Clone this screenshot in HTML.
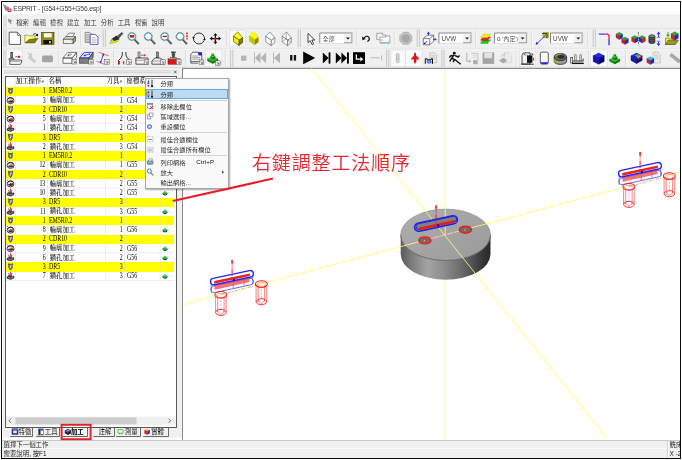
<!DOCTYPE html><html><head><meta charset="utf-8"><title>ESPRIT</title><style>
html,body{margin:0;padding:0;background:#fff;}
body{width:682px;height:460px;position:relative;overflow:hidden;will-change:transform;font-family:"Liberation Sans","Noto Sans CJK TC",sans-serif;font-size:7px;color:#000;line-height:1;}
div,span{position:absolute;box-sizing:border-box;white-space:nowrap;}
svg{position:absolute;left:0;top:0;overflow:visible}
#frame{left:1px;top:1px;width:680px;height:458px;border:1px solid #0a0a0a;z-index:10;pointer-events:none;}
#title{left:2px;top:2px;width:678px;height:12px;background:#fff;}
#title span{left:11.2px;top:3.6px;font-size:6.75px;color:#3c3c3c;letter-spacing:-0.19px;}
#menubar{left:2px;top:14px;width:678px;height:14px;background:#f1f1f1;}
.mi{top:5.6px;font-size:6.4px;color:#2a2a2a;font-weight:350;}
#tb{left:2px;top:28px;width:678px;height:40px;background:#f0f0f0;}
#left{left:2px;top:68px;width:181px;height:370.4px;background:#f0f0f0;}
#list{left:5.2px;top:76.2px;width:171.8px;height:351.4px;background:#fff;border:1px solid #585858;}
.row{left:6px;width:168.4px;height:9.25px;}
.y{background:#ffff00;}
.c{font-family:"Liberation Serif","Noto Serif CJK SC",serif;font-size:6.4px;top:1.5px;color:#000;font-weight:500;}
.l{font-size:7.3px;top:0.7px;transform:scaleX(0.81);transform-origin:0 0;font-weight:400;}
.r{font-size:7.3px;top:0.7px;transform:scaleX(0.81);transform-origin:100% 0;font-weight:400;}
.hd{font-family:"Liberation Serif","Noto Serif CJK SC",serif;font-size:6.4px;top:78.2px;color:#000;font-weight:500;}
#view{left:181.7px;top:67.8px;width:498.3px;height:371.8px;background:#fff;border-top:1px solid #8a8a8a;border-left:1px solid #8a8a8a;}
#status{left:2px;top:439.6px;width:678px;height:18.4px;background:#f0f0f0;border-top:1px solid #c8c8c8;overflow:hidden;}
#status span{font-size:6.4px;color:#111;font-weight:350;}
#cm{left:144.6px;top:78px;width:84px;height:110.5px;background:#f9f9f9;border:1px solid #a6a6a6;box-shadow:1px 1px 1.5px rgba(0,0,0,.35);}
.cmi{left:14.9px;font-size:6.2px;color:#101010;font-weight:350;letter-spacing:0.1px;}
.sep{left:14px;width:67px;height:1px;background:#d4d4d4;}
#note{left:252.0px;top:153.9px;font-size:19px;font-weight:350;color:#ec2430;font-family:"Liberation Sans","Noto Sans CJK TC",sans-serif;letter-spacing:0.85px;}
.tab{top:427.6px;height:9.4px;font-size:6.4px;font-family:"Liberation Sans","Noto Sans CJK TC",sans-serif;border-right:1px solid #6a6a6a;border-bottom:1px solid #6a6a6a;background:#f0f0f0;font-weight:350;border-radius:0 0 1.5px 1px;}
.tab span{top:1.3px;}
</style></head><body>
<div id="title"><span>ESPRIT - [G54+G55+G56.esp]</span></div>
<div id="menubar">
<span class="mi" style="left:14.20px">檔案</span>
<span class="mi" style="left:31.12px">編輯</span>
<span class="mi" style="left:48.04px">檢視</span>
<span class="mi" style="left:64.96px">建立</span>
<span class="mi" style="left:81.88px">加工</span>
<span class="mi" style="left:98.80px">分析</span>
<span class="mi" style="left:115.72px">工具</span>
<span class="mi" style="left:132.64px">視窗</span>
<span class="mi" style="left:149.56px">說明</span>
</div>
<div id="tb"></div>
<div id="left"></div><div style="left:2px;top:14px;width:1.4px;height:425px;background:#fcfcfc"></div>
<div id="list"></div>
<span class="hd" style="left:15.8px">加工操作<i style="font-size:5px">#</i></span>
<span class="hd" style="left:48.5px">名稱</span>
<span class="hd" style="left:106.6px">刀具<i style="font-size:5px">#</i></span>
<span class="hd" style="left:126.5px">座標系</span>
<div class="row y" style="top:86.60px"><span class="c r" style="right:128.7px">1</span><span class="c l" style="left:43.4px">EM5R0.2</span><span class="c r" style="right:51.4px">1</span><span class="c l" style="left:120.8px"></span></div>
<div class="row" style="top:95.85px"><span class="c r" style="right:128.7px">3</span><span class="c " style="left:43.7px">輪廓加工</span><span class="c r" style="right:51.4px">1</span><span class="c l" style="left:120.8px">G54</span></div>
<div class="row y" style="top:105.10px"><span class="c r" style="right:128.7px">2</span><span class="c l" style="left:43.4px">CDR10</span><span class="c r" style="right:51.4px">2</span><span class="c l" style="left:120.8px"></span></div>
<div class="row" style="top:114.35px"><span class="c r" style="right:128.7px">5</span><span class="c " style="left:43.7px">輪廓加工</span><span class="c r" style="right:51.4px">2</span><span class="c l" style="left:120.8px">G54</span></div>
<div class="row" style="top:123.60px"><span class="c r" style="right:128.7px">1</span><span class="c " style="left:43.7px">鑽孔加工</span><span class="c r" style="right:51.4px">2</span><span class="c l" style="left:120.8px">G54</span></div>
<div class="row y" style="top:132.85px"><span class="c r" style="right:128.7px">3</span><span class="c l" style="left:43.4px">DR5</span><span class="c r" style="right:51.4px">3</span><span class="c l" style="left:120.8px"></span></div>
<div class="row" style="top:142.10px"><span class="c r" style="right:128.7px">2</span><span class="c " style="left:43.7px">鑽孔加工</span><span class="c r" style="right:51.4px">3</span><span class="c l" style="left:120.8px">G54</span></div>
<div class="row y" style="top:151.35px"><span class="c r" style="right:128.7px">1</span><span class="c l" style="left:43.4px">EM5R0.2</span><span class="c r" style="right:51.4px">1</span><span class="c l" style="left:120.8px"></span></div>
<div class="row" style="top:160.60px"><span class="c r" style="right:128.7px">12</span><span class="c " style="left:43.7px">輪廓加工</span><span class="c r" style="right:51.4px">1</span><span class="c l" style="left:120.8px">G55</span></div>
<div class="row y" style="top:169.85px"><span class="c r" style="right:128.7px">2</span><span class="c l" style="left:43.4px">CDR10</span><span class="c r" style="right:51.4px">2</span><span class="c l" style="left:120.8px"></span></div>
<div class="row" style="top:179.10px"><span class="c r" style="right:128.7px">13</span><span class="c " style="left:43.7px">輪廓加工</span><span class="c r" style="right:51.4px">2</span><span class="c l" style="left:120.8px">G55</span></div>
<div class="row" style="top:188.35px"><span class="c r" style="right:128.7px">10</span><span class="c " style="left:43.7px">鑽孔加工</span><span class="c r" style="right:51.4px">2</span><span class="c l" style="left:120.8px">G55</span></div>
<div class="row y" style="top:197.60px"><span class="c r" style="right:128.7px">3</span><span class="c l" style="left:43.4px">DR5</span><span class="c r" style="right:51.4px">3</span><span class="c l" style="left:120.8px"></span></div>
<div class="row" style="top:206.85px"><span class="c r" style="right:128.7px">11</span><span class="c " style="left:43.7px">鑽孔加工</span><span class="c r" style="right:51.4px">3</span><span class="c l" style="left:120.8px">G55</span></div>
<div class="row y" style="top:216.10px"><span class="c r" style="right:128.7px">1</span><span class="c l" style="left:43.4px">EM5R0.2</span><span class="c r" style="right:51.4px">1</span><span class="c l" style="left:120.8px"></span></div>
<div class="row" style="top:225.35px"><span class="c r" style="right:128.7px">8</span><span class="c " style="left:43.7px">輪廓加工</span><span class="c r" style="right:51.4px">1</span><span class="c l" style="left:120.8px">G56</span></div>
<div class="row y" style="top:234.60px"><span class="c r" style="right:128.7px">2</span><span class="c l" style="left:43.4px">CDR10</span><span class="c r" style="right:51.4px">2</span><span class="c l" style="left:120.8px"></span></div>
<div class="row" style="top:243.85px"><span class="c r" style="right:128.7px">9</span><span class="c " style="left:43.7px">輪廓加工</span><span class="c r" style="right:51.4px">2</span><span class="c l" style="left:120.8px">G56</span></div>
<div class="row" style="top:253.10px"><span class="c r" style="right:128.7px">6</span><span class="c " style="left:43.7px">鑽孔加工</span><span class="c r" style="right:51.4px">2</span><span class="c l" style="left:120.8px">G56</span></div>
<div class="row y" style="top:262.35px"><span class="c r" style="right:128.7px">3</span><span class="c l" style="left:43.4px">DR5</span><span class="c r" style="right:51.4px">3</span><span class="c l" style="left:120.8px"></span></div>
<div class="row" style="top:271.60px"><span class="c r" style="right:128.7px">7</span><span class="c " style="left:43.7px">鑽孔加工</span><span class="c r" style="right:51.4px">3</span><span class="c l" style="left:120.8px">G56</span></div>
<div id="view"></div>
<div id="status"><div style="left:0;top:7.6px;width:666px;height:1px;background:#fbfbfb"></div><div style="left:666.2px;top:0;width:1px;height:18px;background:#fdfdfd"></div><div style="left:665.4px;top:0;width:0.8px;height:18px;background:#d4d4d4"></div><span style="left:1.6px;top:1.5px">選擇下一個工作</span><span style="left:1.6px;top:10.8px">需要說明, 按F1</span><span style="left:667.6px;top:1.5px">銑床</span><span style="left:667.6px;top:10.4px">X -2</span></div>
<div class="tab" style="left:10px;width:23.4px;"><span style="left:8.6px">特徵</span></div>
<div class="tab" style="left:36.2px;width:23.6px;"><span style="left:8.6px">工具</span></div>
<div class="tab" style="left:62.4px;width:25.6px;font-weight:bold;background:#f6f6f6;"><span style="left:8.6px">加工</span></div>
<div class="tab" style="left:93px;width:21.6px;"><span style="left:5.5px">註解</span></div>
<div class="tab" style="left:116.2px;width:24.8px;"><span style="left:8.6px">測量</span></div>
<div class="tab" style="left:142.6px;width:26.2px;"><span style="left:8.6px">實體</span></div>
<svg width="682" height="460" viewBox="0 0 682 460"><polygon points="3,4 9.8,7.4 8.4,8.6 7.4,10.8 5.2,10.6" fill="#8c8c8c"/><polygon points="3,4 9.8,7.4 7,7.6" fill="#b4b4b4"/><rect x="7.6" y="8.6" width="3.8" height="3.4" fill="#d8203a"/><path d="M8.3,10.3h2.4M9.5,9.2v2.2" stroke="#fff" stroke-width="0.6"/><line x1="4.2" y1="15.5" x2="4.2" y2="27.4" stroke="#c4c4c4" stroke-width="0.7"/><line x1="6" y1="15.5" x2="6" y2="27.4" stroke="#c4c4c4" stroke-width="0.7"/><polygon points="8,18.5 12.8,20.8 10.8,21.4 11.6,23.8 10.4,24 9.8,22 8.6,23" fill="#909090"/><line x1="2" y1="28.3" x2="680" y2="28.3" stroke="#dcdcdc" stroke-width="0.7"/><line x1="2" y1="48.4" x2="680" y2="48.4" stroke="#dedede" stroke-width="0.7"/><line x1="2" y1="49.2" x2="680" y2="49.2" stroke="#fafafa" stroke-width="0.7"/><line x1="2" y1="67.4" x2="680" y2="67.4" stroke="#d0d0d0" stroke-width="0.8"/><line x1="3.8" y1="29.5" x2="3.8" y2="47.0" stroke="#bdbdbd" stroke-width="0.8"/><line x1="6.0" y1="29.5" x2="6.0" y2="47.0" stroke="#bdbdbd" stroke-width="0.8"/><g transform="translate(8.80 31.80)"><path d="M0.4,0.4 H8.6 L11.8,3.8 V12.6 H0.4 Z" fill="#fff" stroke="#333" stroke-width="0.8"/><path d="M8.6,0.4 V3.8 H11.8" fill="none" stroke="#333" stroke-width="0.6"/></g><g transform="translate(24.50 32.00)"><path d="M0.3,3.1 H3.4 L4.2,3.9 H10.7 V10.6 H0.3 Z" fill="#ffff8c" stroke="#5a5a00" stroke-width="0.5"/><polygon points="0.6,10.8 5,7.3 13.5,6.5 9.9,10.8" fill="#848400" stroke="#3a3a00" stroke-width="0.5"/><path d="M8.6,2.4 q2.4,-2 4.2,0.8" fill="none" stroke="#111" stroke-width="0.8"/><polygon points="13.6,1.6 13.4,4.6 11,3.6" fill="#111"/></g><g transform="translate(41.30 32.00)"><rect x="0.3" y="0.3" width="12.4" height="12" fill="#8c8c10" stroke="#3c3c00" stroke-width="0.6"/><rect x="2.6" y="1.2" width="7.8" height="4.2" fill="#fafafa"/><rect x="2" y="8" width="8.6" height="4.2" fill="#111"/><rect x="7.8" y="9" width="1.6" height="2.4" fill="#ddd"/></g><line x1="59" y1="30.5" x2="59" y2="46.0" stroke="#c6c6c6" stroke-width="0.7"/><line x1="59.7" y1="30.5" x2="59.7" y2="46.0" stroke="#ffffff" stroke-width="0.7"/><g transform="translate(62.70 32.00)"><polygon points="3.2,4.8 6,1.2 12,1.2 10,4.8" fill="#fff" stroke="#333" stroke-width="0.6"/><polygon points="0.5,7.2 3.2,4.6 12.8,4.6 10.4,7.2" fill="#e0e0e0" stroke="#333" stroke-width="0.6"/><rect x="0.5" y="7.2" width="9.9" height="4.3" fill="#f4f4f4" stroke="#333" stroke-width="0.6"/><polygon points="10.4,7.2 12.8,4.6 12.8,9 10.4,11.5" fill="#9a9a9a" stroke="#333" stroke-width="0.6"/><rect x="7.6" y="8.2" width="1.8" height="1.2" fill="#f0e000"/></g><line x1="80.6" y1="30.5" x2="80.6" y2="46.0" stroke="#c6c6c6" stroke-width="0.7"/><line x1="81.3" y1="30.5" x2="81.3" y2="46.0" stroke="#ffffff" stroke-width="0.7"/><g transform="translate(84.80 32.00)"><path d="M0.4,0.4 H5 L7.2,2.6 V10.4 H0.4 Z" fill="#e4e4e4" stroke="#555" stroke-width="0.6"/><path d="M1.4,2.6h3.4M1.4,4.2h4.6M1.4,5.8h4.6M1.4,7.4h4.6M1.4,9h4.6" stroke="#666" stroke-width="0.5"/><path d="M5.4,2.4 H10.4 L13.2,5 V12.4 H5.4 Z" fill="#fdfdff" stroke="#3c3cb0" stroke-width="0.8"/><path d="M6.8,5.6h3.6M6.8,7.2h5M6.8,8.8h5M6.8,10.4h5" stroke="#888" stroke-width="0.5"/></g><line x1="103.2" y1="29.5" x2="103.2" y2="47.0" stroke="#bdbdbd" stroke-width="0.8"/><line x1="105.4" y1="29.5" x2="105.4" y2="47.0" stroke="#bdbdbd" stroke-width="0.8"/><g transform="translate(109.30 32.00)"><polygon points="0.5,11.8 1.5,9.2 9,7.4 8,10" fill="#e8e810" stroke="#8a8a00" stroke-width="0.4"/><polygon points="2.6,6.8 7.2,3.6 10.4,7.2 4.6,9" fill="#2c2c2c"/><polygon points="8,4.2 12.6,0.4 13.6,1.6 9.6,6" fill="#555" stroke="#111" stroke-width="0.5"/><path d="M3,6.6 L1.6,9.2" stroke="#333" stroke-width="0.6"/></g><g transform="translate(127.60 32.00)"><line x1="7" y1="7.4" x2="11.2" y2="12" stroke="#4a4a4a" stroke-width="2"/><line x1="7.8" y1="7.4" x2="11.4" y2="11.4" stroke="#d0d0d0" stroke-width="0.6"/><circle cx="4.3" cy="4.5" r="3.6" fill="#fff" stroke="#20a8b8" stroke-width="1"/><circle cx="4.3" cy="4.5" r="4.2" fill="none" stroke="#555" stroke-width="0.35"/><rect x="2.2" y="3" width="4.4" height="2.6" fill="#e81010"/></g><g transform="translate(144.00 32.00)"><line x1="7" y1="7.4" x2="11.2" y2="12" stroke="#4a4a4a" stroke-width="2"/><line x1="7.8" y1="7.4" x2="11.4" y2="11.4" stroke="#d0d0d0" stroke-width="0.6"/><circle cx="4.3" cy="4.5" r="3.6" fill="#fff" stroke="#20a8b8" stroke-width="1"/><circle cx="4.3" cy="4.5" r="4.2" fill="none" stroke="#555" stroke-width="0.35"/></g><g transform="translate(160.40 32.00)"><line x1="7" y1="7.4" x2="11.2" y2="12" stroke="#4a4a4a" stroke-width="2"/><line x1="7.8" y1="7.4" x2="11.4" y2="11.4" stroke="#d0d0d0" stroke-width="0.6"/><circle cx="4.3" cy="4.5" r="3.6" fill="#fff" stroke="#20a8b8" stroke-width="1"/><circle cx="4.3" cy="4.5" r="4.2" fill="none" stroke="#555" stroke-width="0.35"/><rect x="2.2" y="3.7" width="4.4" height="1.4" fill="#e81010"/></g><g transform="translate(175.80 32.00)"><line x1="7" y1="7.4" x2="11.2" y2="12" stroke="#4a4a4a" stroke-width="2"/><line x1="7.8" y1="7.4" x2="11.4" y2="11.4" stroke="#d0d0d0" stroke-width="0.6"/><circle cx="4.3" cy="4.5" r="3.6" fill="#fff" stroke="#20a8b8" stroke-width="1"/><circle cx="4.3" cy="4.5" r="4.2" fill="none" stroke="#555" stroke-width="0.35"/><rect x="10.4" y="0.6" width="1.6" height="1.8" fill="#e81010"/><rect x="10.4" y="3.4" width="1.6" height="1.8" fill="#e81010"/><rect x="10.4" y="6.2" width="1.6" height="1.2" fill="#e81010"/></g><g transform="translate(192.70 32.00)"><circle cx="6.3" cy="6.5" r="5.5" fill="none" stroke="#222" stroke-width="0.9"/><polygon points="-0.4,5 2,5 0.8,7.4" fill="#111"/><polygon points="10.6,8 13,8 11.8,5.6" fill="#111"/></g><g transform="translate(209.70 32.90)"><path d="M5.7,1.4V10M1.4,5.7H10" stroke="#111" stroke-width="1.3"/><polygon points="5.7,0 7.7,2.5 3.7,2.5" fill="#111"/><polygon points="5.7,11.4 7.7,8.9 3.7,8.9" fill="#111"/><polygon points="0,5.7 2.5,3.7 2.5,7.7" fill="#111"/><polygon points="11.4,5.7 8.9,3.7 8.9,7.7" fill="#111"/><circle cx="5.7" cy="5.7" r="1.2" fill="#e81010"/></g><line x1="226.5" y1="30.5" x2="226.5" y2="46.0" stroke="#c6c6c6" stroke-width="0.7"/><line x1="227.2" y1="30.5" x2="227.2" y2="46.0" stroke="#ffffff" stroke-width="0.7"/><rect x="229.6" y="30.2" width="15.8" height="16.2" fill="#fbfbfb" stroke="#d8d8d8" stroke-width="0.5"/><g transform="translate(233.40 31.90)"><polygon points="4.4,0 9.3,5.9 5.8,8.2 0,4.3" fill="#ffff00" stroke="#303000" stroke-width="0.55" stroke-linejoin="round"/><polygon points="0,4.3 5.8,8.2 5.5,13.6 0.3,10" fill="#f4f400" stroke="#303000" stroke-width="0.55" stroke-linejoin="round"/><polygon points="5.8,8.2 9.3,5.9 9.3,10.5 5.5,13.6" fill="#808000" stroke="#303000" stroke-width="0.55" stroke-linejoin="round"/></g><g transform="translate(249.20 31.40)"><polygon points="4.4,0 9.3,5.9 5.8,8.2 0,4.3" fill="#ffff00" stroke="#b8b800" stroke-width="0.2" stroke-linejoin="round"/><polygon points="0,4.3 5.8,8.2 5.5,13.6 0.3,10" fill="#c4c400" stroke="#b8b800" stroke-width="0.2" stroke-linejoin="round"/><polygon points="5.8,8.2 9.3,5.9 9.3,10.5 5.5,13.6" fill="#8a8a00" stroke="#b8b800" stroke-width="0.2" stroke-linejoin="round"/></g><g transform="translate(265.60 32.00)"><polygon points="4.4,0 9.3,5.9 5.8,8.2 0,4.3" fill="#fcfcfc" stroke="#555" stroke-width="0.55" stroke-linejoin="round"/><polygon points="0,4.3 5.8,8.2 5.5,13.6 0.3,10" fill="#f8f8f8" stroke="#555" stroke-width="0.55" stroke-linejoin="round"/><polygon points="5.8,8.2 9.3,5.9 9.3,10.5 5.5,13.6" fill="#f4f4f4" stroke="#555" stroke-width="0.55" stroke-linejoin="round"/></g><g transform="translate(282.00 32.00)"><polygon points="4.4,0 9.3,5.9 5.8,8.2 0,4.3" fill="#fcfcfc" stroke="#555" stroke-width="0.55" stroke-linejoin="round"/><polygon points="0,4.3 5.8,8.2 5.5,13.6 0.3,10" fill="#f8f8f8" stroke="#555" stroke-width="0.55" stroke-linejoin="round"/><polygon points="5.8,8.2 9.3,5.9 9.3,10.5 5.5,13.6" fill="#f4f4f4" stroke="#555" stroke-width="0.55" stroke-linejoin="round"/><path d="M4.1,6.7 L4.4,0 M4.1,6.7 L0.3,10 M4.1,6.7 L9.3,10.5" fill="none" stroke="#555" stroke-width="0.44000000000000006"/></g><line x1="298.2" y1="29.5" x2="298.2" y2="47.0" stroke="#bdbdbd" stroke-width="0.8"/><line x1="300.4" y1="29.5" x2="300.4" y2="47.0" stroke="#bdbdbd" stroke-width="0.8"/><g transform="translate(307.60 33.00)"><path d="M0.4,0.4 V9.6 L2.6,7.6 L4.4,11.6 L6,10.9 L4.3,7 H7.2 Z" fill="#fff" stroke="#111" stroke-width="0.8"/></g><rect x="319.8" y="33.0" width="32.8" height="10.5" fill="#fff"/><path d="M319.8,43.5 V33.0 H352.6" fill="none" stroke="#7c7c7c" stroke-width="0.9"/><path d="M319.8,43.5 H352.6 V33.0" fill="none" stroke="#dadada" stroke-width="0.8"/><clipPath id="c319"><rect x="319.8" y="33.0" width="23.999999999999996" height="10.5"/></clipPath><text x="322.40000000000003" y="40.9" clip-path="url(#c319)" font-family="Liberation Sans, Noto Sans CJK TC, sans-serif" font-weight="350" font-size="6.2" fill="#444">全部</text><rect x="344.0" y="33.9" width="7.8" height="8.9" fill="#f0f0f0"/><path d="M344.0,42.7 H351.8 V33.9" fill="none" stroke="#8a8a8a" stroke-width="0.8"/><polygon points="346.1,37.4 349.9,37.4 348.0,39.6" fill="#111"/><line x1="357" y1="30.5" x2="357" y2="46.0" stroke="#c6c6c6" stroke-width="0.7"/><line x1="357.7" y1="30.5" x2="357.7" y2="46.0" stroke="#ffffff" stroke-width="0.7"/><g transform="translate(361.80 35.00)"><path d="M2.2,3 Q5,-0.4 7.2,2.6 Q8.4,5 5.6,6.6" fill="none" stroke="#111" stroke-width="1.15"/><polygon points="0.2,1.4 0.6,5.2 4,4" fill="#111"/></g><g transform="translate(376.20 32.40)"><path d="M0.5,0.8 H6.4 V2.4 H9.4 V7.2 H0.5 Z" fill="#f4f4f4" stroke="#8a8a8a" stroke-width="0.7"/><path d="M3.8,4.6 H9.6 L10.4,3.4 H13.6 V10.6 H3.8 Z" fill="#fafafa" stroke="#8a8a8a" stroke-width="0.7"/><path d="M4,10.4 H13.4" stroke="#50b8c8" stroke-width="0.9"/><rect x="5.4" y="7.2" width="0.9" height="0.9" fill="#3030e0"/></g><line x1="394.4" y1="30.5" x2="394.4" y2="46.0" stroke="#c6c6c6" stroke-width="0.7"/><line x1="395.09999999999997" y1="30.5" x2="395.09999999999997" y2="46.0" stroke="#ffffff" stroke-width="0.7"/><g transform="translate(399.50 32.00)"><polygon points="3.7,0.3 8.9,0.3 12.3,3.7 12.3,8.9 8.9,12.3 3.7,12.3 0.3,8.9 0.3,3.7" fill="#c4c4c4" stroke="#9c9c9c" stroke-width="0.6"/><polygon points="4.6,2.2 8,2.2 10.4,4.6 10.4,8 8,10.4 4.6,10.4 2.2,8 2.2,4.6" fill="#a8a8a8"/></g><line x1="417.2" y1="29.5" x2="417.2" y2="47.0" stroke="#bdbdbd" stroke-width="0.8"/><line x1="419.4" y1="29.5" x2="419.4" y2="47.0" stroke="#bdbdbd" stroke-width="0.8"/><g transform="translate(422.80 32.00)"><path d="M0.5,6.6 L4.4,3.2 H10.8 V9.4 L6.9,12.8 H0.5 Z" fill="#fdfdfd" stroke="#444" stroke-width="0.65"/><path d="M0.5,6.6 H6.9 V12.8 M6.9,6.6 L10.8,3.2" fill="none" stroke="#444" stroke-width="0.65"/><path d="M5.6,3.4 V0.8 M10.4,7.4 H13 M4.4,9 L1.8,11.6" stroke="#2020f0" stroke-width="0.9"/><polygon points="5.6,-0.4 7,2 4.2,2" fill="#2020f0"/><polygon points="14,7.4 11.8,6 11.8,8.8" fill="#2020f0"/><polygon points="0.9,12.5 1.5,10.2 3.2,11.9" fill="#2020f0"/></g><rect x="438.9" y="33.0" width="32.8" height="10.5" fill="#fff"/><path d="M438.9,43.5 V33.0 H471.7" fill="none" stroke="#7c7c7c" stroke-width="0.9"/><path d="M438.9,43.5 H471.7 V33.0" fill="none" stroke="#dadada" stroke-width="0.8"/><clipPath id="c438"><rect x="438.9" y="33.0" width="23.999999999999996" height="10.5"/></clipPath><text x="441.5" y="40.9" clip-path="url(#c438)" font-family="Liberation Sans, Noto Sans CJK TC, sans-serif" font-weight="350" font-size="6.3" fill="#444">UVW</text><rect x="463.09999999999997" y="33.9" width="7.8" height="8.9" fill="#f0f0f0"/><path d="M463.09999999999997,42.7 H470.9 V33.9" fill="none" stroke="#8a8a8a" stroke-width="0.8"/><polygon points="465.2,37.4 468.99999999999994,37.4 467.09999999999997,39.6" fill="#111"/><line x1="475.5" y1="30.5" x2="475.5" y2="46.0" stroke="#c6c6c6" stroke-width="0.7"/><line x1="476.2" y1="30.5" x2="476.2" y2="46.0" stroke="#ffffff" stroke-width="0.7"/><g transform="translate(480.40 33.20)"><polygon points="0.4,9.2 3.2,6.6 10.4,6.6 7.6,9.2 7.6,10.2 0.4,10.2" fill="#18d018" stroke="#0a700a" stroke-width="0.3"/><polygon points="0.4,6.4 3.2,3.8 10.4,3.8 7.6,6.4 7.6,7.4 0.4,7.4" fill="#f01818" stroke="#800a0a" stroke-width="0.3"/><polygon points="0.4,3.6 3.2,1 10.4,1 7.6,3.6 7.6,4.6 0.4,4.6" fill="#f4f400" stroke="#8a8a00" stroke-width="0.3"/></g><rect x="494.4" y="33.0" width="32.8" height="10.5" fill="#fff"/><path d="M494.4,43.5 V33.0 H527.1999999999999" fill="none" stroke="#7c7c7c" stroke-width="0.9"/><path d="M494.4,43.5 H527.1999999999999 V33.0" fill="none" stroke="#dadada" stroke-width="0.8"/><clipPath id="c494"><rect x="494.4" y="33.0" width="23.999999999999996" height="10.5"/></clipPath><text x="497.0" y="40.9" clip-path="url(#c494)" font-family="Liberation Sans, Noto Sans CJK TC, sans-serif" font-weight="350" font-size="6.2" fill="#444">0 '內定'(</text><rect x="518.5999999999999" y="33.9" width="7.8" height="8.9" fill="#f0f0f0"/><path d="M518.5999999999999,42.7 H526.3999999999999 V33.9" fill="none" stroke="#8a8a8a" stroke-width="0.8"/><polygon points="520.6999999999999,37.4 524.4999999999999,37.4 522.5999999999999,39.6" fill="#111"/><line x1="531.4" y1="30.5" x2="531.4" y2="46.0" stroke="#c6c6c6" stroke-width="0.7"/><line x1="532.1" y1="30.5" x2="532.1" y2="46.0" stroke="#ffffff" stroke-width="0.7"/><g transform="translate(535.60 32.00)"><rect x="7.4" y="0.4" width="5.4" height="5.4" fill="#c8c820" stroke="#8a8a00" stroke-width="0.5"/><path d="M1,12 L10.6,2.6" stroke="#2828f0" stroke-width="0.9"/><polygon points="0,12.8 0.8,9.8 3,12" fill="#2828f0"/><path d="M6.6,1.6 H11.4 V6.2" fill="none" stroke="#111" stroke-width="0.8"/></g><rect x="550.5" y="33.0" width="32.4" height="10.5" fill="#fff"/><path d="M550.5,43.5 V33.0 H582.9" fill="none" stroke="#7c7c7c" stroke-width="0.9"/><path d="M550.5,43.5 H582.9 V33.0" fill="none" stroke="#dadada" stroke-width="0.8"/><clipPath id="c550"><rect x="550.5" y="33.0" width="23.599999999999998" height="10.5"/></clipPath><text x="553.1" y="40.9" clip-path="url(#c550)" font-family="Liberation Sans, Noto Sans CJK TC, sans-serif" font-weight="350" font-size="6.3" fill="#444">UVW</text><rect x="574.3" y="33.9" width="7.8" height="8.9" fill="#f0f0f0"/><path d="M574.3,42.7 H582.0999999999999 V33.9" fill="none" stroke="#8a8a8a" stroke-width="0.8"/><polygon points="576.4,37.4 580.1999999999999,37.4 578.3,39.6" fill="#111"/><line x1="588" y1="30.5" x2="588" y2="46.0" stroke="#c6c6c6" stroke-width="0.7"/><line x1="588.7" y1="30.5" x2="588.7" y2="46.0" stroke="#ffffff" stroke-width="0.7"/><line x1="593.2" y1="29.5" x2="593.2" y2="47.0" stroke="#bdbdbd" stroke-width="0.8"/><line x1="595.4000000000001" y1="29.5" x2="595.4000000000001" y2="47.0" stroke="#bdbdbd" stroke-width="0.8"/><g transform="translate(599.20 33.20)"><path d="M-0.4,0.9 H6.4" stroke="#2020f0" stroke-width="1.1"/><path d="M6.4,0.9 H8.4 L9.8,2.4 V5.6" fill="none" stroke="#f01818" stroke-width="1.2"/><path d="M9.8,5.6 V12" stroke="#2020f0" stroke-width="1.2"/></g><g transform="translate(616.00 32.20)"><polygon points="3.3,0 6.6,1.776 3.3,3.552 0,1.776" fill="#18b818" stroke="#333" stroke-width="0.25"/><polygon points="0,1.776 3.3,3.552 3.3,7.4 0,5.6240000000000006" fill="#e81818" stroke="#333" stroke-width="0.25"/><polygon points="6.6,1.776 3.3,3.552 3.3,7.4 6.6,5.6240000000000006" fill="#2020e0" stroke="#333" stroke-width="0.25"/></g><g transform="translate(621.60 37.00)"><polygon points="3.4,0 6.8,1.776 3.4,3.552 0,1.776" fill="#18b818" stroke="#333" stroke-width="0.25"/><polygon points="0,1.776 3.4,3.552 3.4,7.4 0,5.6240000000000006" fill="#e81818" stroke="#333" stroke-width="0.25"/><polygon points="6.8,1.776 3.4,3.552 3.4,7.4 6.8,5.6240000000000006" fill="#2020e0" stroke="#333" stroke-width="0.25"/></g><g transform="translate(631.60 35.40)"><polygon points="3.2,0 6.4,1.8239999999999998 3.2,3.6479999999999997 0,1.8239999999999998" fill="#18b818" stroke="#333" stroke-width="0.25"/><polygon points="0,1.8239999999999998 3.2,3.6479999999999997 3.2,7.6 0,5.776" fill="#e81818" stroke="#333" stroke-width="0.25"/><polygon points="6.4,1.8239999999999998 3.2,3.6479999999999997 3.2,7.6 6.4,5.776" fill="#2020e0" stroke="#333" stroke-width="0.25"/></g><g transform="translate(639.00 35.40)"><polygon points="3.2,0 6.4,1.8239999999999998 3.2,3.6479999999999997 0,1.8239999999999998" fill="#18b818" stroke="#333" stroke-width="0.25"/><polygon points="0,1.8239999999999998 3.2,3.6479999999999997 3.2,7.6 0,5.776" fill="#2020e0" stroke="#333" stroke-width="0.25"/><polygon points="6.4,1.8239999999999998 3.2,3.6479999999999997 3.2,7.6 6.4,5.776" fill="#e81818" stroke="#333" stroke-width="0.25"/></g><line x1="638.4" y1="32" x2="638.4" y2="45.4" stroke="#222" stroke-width="0.6" stroke-dasharray="2.4 0.8 0.8 0.8"/><g transform="translate(648.50 34.60)"><path d="M0.4,1.6 V7.6 A3,1.4 0 0 0 6.4,7.6 V1.6" fill="#555" stroke="#111" stroke-width="0.6"/><ellipse cx="3.4" cy="1.6" rx="3" ry="1.4" fill="#8a8a8a" stroke="#111" stroke-width="0.6"/><path d="M0.4,3.6 A3,1.4 0 0 0 6.4,3.6 M0.4,5.6 A3,1.4 0 0 0 6.4,5.6" fill="none" stroke="#222" stroke-width="0.4"/><path d="M10,-2 V2.4 M10,7 V10.6" stroke="#3838f8" stroke-width="1"/><polygon points="10,-3 12,-0.4 8,-0.4" fill="#3838f8"/><polygon points="10,11.6 12,9 8,9" fill="#3838f8"/><path d="M8.2,2.8 h3.6 M8.2,6.6 h3.6" stroke="#3838f8" stroke-width="0.6"/></g><g transform="translate(665.00 32.00)"><path d="M0.5,6 H4.4 L5.4,7.2 H9.6 V12.4 H0.5 Z" fill="#e8e860" stroke="#555500" stroke-width="0.5"/><path d="M0.5,12.4 L3,8.2 H13.4 L10.6,12.4 Z" fill="#9a9a20" stroke="#3a3a00" stroke-width="0.5"/><path d="M3,0.2 V3.6" stroke="#18a018" stroke-width="0.9"/><polygon points="3,5 1.2,2.8 4.8,2.8" fill="#18a018"/></g><g transform="translate(671.00 31.80)"><polygon points="3.7,0 7.4,2.016 3.7,4.032 0,2.016" fill="#18b818" stroke="#333" stroke-width="0.25"/><polygon points="0,2.016 3.7,4.032 3.7,8.4 0,6.384" fill="#e81818" stroke="#333" stroke-width="0.25"/><polygon points="7.4,2.016 3.7,4.032 3.7,8.4 7.4,6.384" fill="#2020e0" stroke="#333" stroke-width="0.25"/></g><line x1="3.8" y1="49.5" x2="3.8" y2="67.0" stroke="#bdbdbd" stroke-width="0.8"/><line x1="6.0" y1="49.5" x2="6.0" y2="67.0" stroke="#bdbdbd" stroke-width="0.8"/><rect x="6.6" y="50.0" width="15.6" height="16.4" fill="#fbfbfb" stroke="#d8d8d8" stroke-width="0.5"/><g transform="translate(8.60 51.60)"><rect x="2.2" y="0.6" width="1.9" height="6" fill="#7a7a7a" stroke="#222" stroke-width="0.5"/><rect x="0.4" y="6.6" width="5" height="1.8" fill="#e8e8e8" stroke="#222" stroke-width="0.5"/><path d="M1.2,8.4 H13 V10.4 L11.8,12.8 H1.2 Z" fill="#fafafa" stroke="#222" stroke-width="0.7"/><path d="M1.2,10 H11.6" stroke="#333" stroke-width="0.4"/><path d="M6.4,5.2 H9.6" stroke="#e83030" stroke-width="0.8"/><rect x="9.4" y="4.2" width="2.2" height="2" fill="#e81818"/></g><g transform="translate(25.00 51.60)"><path d="M3.4,0.8 L4.6,3.6 L3.4,6.4 L9.6,11.2 L11,9.8 L6.4,5.6 L6.8,1.4 L5.4,2.8 Z" fill="#d0d0d0" stroke="#b4b4b4" stroke-width="0.5"/></g><g transform="translate(41.40 54.40)"><rect x="0.6" y="1" width="11" height="6.8" rx="1.6" fill="#a4a4a4"/><path d="M9,0.8 l2,-1.6" stroke="#b8b8b8" stroke-width="0.7"/></g><line x1="58.4" y1="50.5" x2="58.4" y2="66.0" stroke="#c6c6c6" stroke-width="0.7"/><line x1="59.1" y1="50.5" x2="59.1" y2="66.0" stroke="#ffffff" stroke-width="0.7"/><g transform="translate(62.40 51.60)"><polygon points="0.6,6.2 5.4,0.8 14.2,0.8 9.8,6.2" fill="#fafafa" stroke="#2a2a2a" stroke-width="0.6"/><rect x="0.6" y="6.6" width="9.2" height="5" fill="#fafafa" stroke="#2a2a2a" stroke-width="0.6"/><polygon points="9.8,6.6 14.2,1.2 14.2,5.6 9.8,11.6" fill="#fafafa" stroke="#2a2a2a" stroke-width="0.6"/><polygon points="5,4.2 6.6,2.4 9.4,2.4 7.8,4.2" fill="#e8e8e8" stroke="#555" stroke-width="0.4"/><rect x="5.6" y="3" width="1.2" height="1" fill="#333"/><rect x="9.6" y="7.8" width="4.6" height="4.6" fill="#ececec" stroke="#555" stroke-width="0.5"/><path d="M10.799999999999999,9.0 L13.0,11.2 M13.0,9.6 V11.2 H11.4" stroke="#333" stroke-width="0.5" fill="none"/></g><g transform="translate(79.00 51.60)"><polygon points="0.6,6.2 5.4,0.8 14.2,0.8 9.8,6.2" fill="#e8e8ff" stroke="#2828e0" stroke-width="0.9"/><rect x="0.6" y="6.6" width="9.2" height="5" fill="#808080" stroke="#2a2a2a" stroke-width="0.6"/><polygon points="9.8,6.6 14.2,1.2 14.2,5.6 9.8,11.6" fill="#808080" stroke="#2a2a2a" stroke-width="0.6"/><path d="M4.8,4 L10.4,2.6" stroke="#2828e0" stroke-width="0.7"/><polygon points="11.4,2.4 9.8,1.6 10,3.6" fill="#2828e0"/><rect x="5" y="3.2" width="1.6" height="1.4" fill="#333"/><rect x="9.6" y="7.8" width="4.6" height="4.6" fill="#ececec" stroke="#555" stroke-width="0.5"/><path d="M10.799999999999999,9.0 L13.0,11.2 M13.0,9.6 V11.2 H11.4" stroke="#333" stroke-width="0.5" fill="none"/></g><g transform="translate(96.00 51.60)"><path d="M2.6,0.6 L12.8,4.2 M0.4,9.6 L8,12.6" stroke="#f02828" stroke-width="0.7"/><path d="M7.4,2.6 L4.6,10.8" stroke="#2828f0" stroke-width="0.8"/><polygon points="7.8,1.6 8.2,4.4 6,3.6" fill="#2828f0"/><polygon points="4.2,12 3.8,9.2 6,10" fill="#2828f0"/><rect x="8.6" y="8" width="4.6" height="4.6" fill="#ececec" stroke="#555" stroke-width="0.5"/><path d="M9.799999999999999,9.2 L12.0,11.4 M12.0,9.8 V11.4 H10.4" stroke="#333" stroke-width="0.5" fill="none"/></g><line x1="113.5" y1="50.5" x2="113.5" y2="66.0" stroke="#c6c6c6" stroke-width="0.7"/><line x1="114.2" y1="50.5" x2="114.2" y2="66.0" stroke="#ffffff" stroke-width="0.7"/><g transform="translate(117.70 51.60)"><path d="M4.6,0.4 V3.4 Q4.2,6.4 0.8,9 V12.8 M8.2,0.4 V3.4 Q8.6,6.4 12.6,9" fill="none" stroke="#222" stroke-width="0.9"/><rect x="0.6" y="9.4" width="1.6" height="3.4" fill="#e81818"/><rect x="5.4" y="9.6" width="1.2" height="3.2" fill="#e81818"/><rect x="9" y="8.2" width="4.6" height="4.6" fill="#ececec" stroke="#555" stroke-width="0.5"/><path d="M10.2,9.399999999999999 L12.4,11.6 M12.4,10.0 V11.6 H10.8" stroke="#333" stroke-width="0.5" fill="none"/></g><g transform="translate(135.40 51.60)"><rect x="2.6" y="0.4" width="2" height="5.8" fill="#c8c8c8" stroke="#222" stroke-width="0.5"/><path d="M0.5,6.4 H12.6 V12.6 H0.5 Z" fill="#f2f2f2" stroke="#222" stroke-width="0.75"/><path d="M0.5,8.6 H12.6" stroke="#222" stroke-width="0.4"/><path d="M5.6,3.6 H9.4" stroke="#e81818" stroke-width="0.8"/><polygon points="10.6,3.6 8.8,2.4 8.8,4.8" fill="#e81818"/><rect x="8.8" y="8.2" width="4.6" height="4.6" fill="#ececec" stroke="#555" stroke-width="0.5"/><path d="M10.0,9.399999999999999 L12.200000000000001,11.6 M12.200000000000001,10.0 V11.6 H10.600000000000001" stroke="#333" stroke-width="0.5" fill="none"/></g><g transform="translate(151.40 51.60)"><rect x="5" y="0.4" width="2.2" height="6" fill="#8a8a8a" stroke="#333" stroke-width="0.5"/><path d="M3.4,6.4 H8.8 L12.8,9.4 V12.6 H0.5 V9.4 Z" fill="#f0f0f0" stroke="#222" stroke-width="0.75"/><path d="M0.5,9.4 H12.8" stroke="#222" stroke-width="0.4"/><rect x="9.2" y="8.2" width="4.6" height="4.6" fill="#ececec" stroke="#555" stroke-width="0.5"/><path d="M10.399999999999999,9.399999999999999 L12.6,11.6 M12.6,10.0 V11.6 H11.0" stroke="#333" stroke-width="0.5" fill="none"/></g><g transform="translate(167.50 51.60)"><rect x="3.6" y="0" width="4.6" height="1.2" fill="#222"/><rect x="5" y="1.2" width="1.8" height="5" fill="#555" stroke="#222" stroke-width="0.4"/><path d="M3.8,2.6h4.2M4.2,4.2h3.4" stroke="#222" stroke-width="0.5"/><rect x="2.6" y="5.4" width="1.4" height="1.2" fill="#e02020"/><rect x="7.6" y="5.4" width="1.4" height="1.2" fill="#e02020"/><rect x="0.5" y="6.8" width="8.4" height="1.4" fill="#f0f0f0" stroke="#222" stroke-width="0.4"/><rect x="0.5" y="8.2" width="8.4" height="4.4" fill="#e01818" stroke="#700" stroke-width="0.5"/><path d="M9,7 H12.6 V8.4" fill="none" stroke="#222" stroke-width="0.5"/><rect x="9" y="8.2" width="4.6" height="4.6" fill="#ececec" stroke="#555" stroke-width="0.5"/><path d="M10.2,9.399999999999999 L12.4,11.6 M12.4,10.0 V11.6 H10.8" stroke="#333" stroke-width="0.5" fill="none"/></g><line x1="185.5" y1="50.5" x2="185.5" y2="66.0" stroke="#c6c6c6" stroke-width="0.7"/><line x1="186.2" y1="50.5" x2="186.2" y2="66.0" stroke="#ffffff" stroke-width="0.7"/><g transform="translate(190.20 51.60)"><path d="M2.6,0.6 H8.4 V3 H11.6 V10 H0.6 V3 Z" fill="#f8f8f8" stroke="#222" stroke-width="0.7"/><rect x="8.4" y="0.6" width="3.4" height="3.2" fill="#2020c8"/><path d="M2,4.4h6M2,6h8M2,7.6h8" stroke="#555" stroke-width="0.5"/><path d="M0.6,10 V11.6 H8" stroke="#222" stroke-width="0.6" fill="none"/><rect x="9" y="8.4" width="4.6" height="4.6" fill="#ececec" stroke="#555" stroke-width="0.5"/><path d="M10.2,9.6 L12.4,11.8 M12.4,10.200000000000001 V11.8 H10.8" stroke="#333" stroke-width="0.5" fill="none"/></g><rect x="205.4" y="50.0" width="16.2" height="16.4" fill="#fbfbfb" stroke="#d8d8d8" stroke-width="0.5"/><g transform="translate(207.40 53.20)"><g transform="scale(0.88)"><polygon points="0,6.6 5.6,3.8 12,6.6 6.2,9.6" fill="#30d030" stroke="#0a700a" stroke-width="0.4"/><polygon points="0,6.6 6.2,9.6 6.2,11.8 0,8.8" fill="#109010" stroke="#0a600a" stroke-width="0.4"/><polygon points="12,6.6 6.2,9.6 6.2,11.8 12,8.8" fill="#0a700a" stroke="#0a600a" stroke-width="0.4"/><polygon points="3.4,3.4 6,2 9,3.4 6.2,4.8" fill="#40e040" stroke="#0a700a" stroke-width="0.4"/><polygon points="3.4,3.4 6.2,4.8 6.2,7.4 3.4,6" fill="#109010"/><polygon points="9,3.4 6.2,4.8 6.2,7.4 9,6" fill="#0a700a"/><polygon points="4.6,1 6,0.2 7.6,1 6.2,1.8" fill="#50f050" stroke="#0a700a" stroke-width="0.3"/><polygon points="4.6,1 6.2,1.8 6.2,3.4 4.6,2.6" fill="#109010"/><polygon points="7.6,1 6.2,1.8 6.2,3.4 7.6,2.6" fill="#0a700a"/></g><rect x="8.2" y="7.6" width="4.6" height="4.6" fill="#ececec" stroke="#555" stroke-width="0.5"/><path d="M9.399999999999999,8.799999999999999 L11.6,11.0 M11.6,9.4 V11.0 H10.0" stroke="#333" stroke-width="0.5" fill="none"/></g><line x1="225.3" y1="50.5" x2="225.3" y2="66.0" stroke="#c6c6c6" stroke-width="0.7"/><line x1="226.0" y1="50.5" x2="226.0" y2="66.0" stroke="#ffffff" stroke-width="0.7"/><line x1="230.6" y1="49.5" x2="230.6" y2="67.0" stroke="#bdbdbd" stroke-width="0.8"/><line x1="232.79999999999998" y1="49.5" x2="232.79999999999998" y2="67.0" stroke="#bdbdbd" stroke-width="0.8"/><rect x="241" y="55.6" width="5.4" height="5.2" fill="#b4b4b4"/><rect x="254" y="52.4" width="0.9" height="11" fill="#b4b4b4"/><polygon points="254.9,57.9 260.5,52.6 260.5,63.2" fill="#b4b4b4"/><polygon points="260.5,57.9 266.1,52.6 266.1,63.2" fill="#b4b4b4"/><rect x="273" y="52.4" width="0.9" height="11" fill="#b4b4b4"/><polygon points="273.9,57.9 280,52.6 280,63.2" fill="#b4b4b4"/><rect x="290.1" y="55" width="2.3" height="5.6" fill="#111"/><rect x="293.8" y="55" width="2.3" height="5.6" fill="#111"/><polygon points="303.2,51.6 315.2,57.9 303.2,64.2" fill="#000"/><polygon points="322.8,52.4 328.6,58 322.8,63.6" fill="#000"/><rect x="328.6" y="52.4" width="1.8" height="11.2" fill="#000"/><polygon points="335.8,52.4 341.4,58 335.8,63.6" fill="#000"/><polygon points="341.4,52.4 347,58 341.4,63.6" fill="#000"/><rect x="347" y="52.4" width="1.9" height="11.2" fill="#000"/><rect x="353" y="52.2" width="12" height="11.8" fill="#000"/><path d="M356.4,54.4 V59.2 H361" fill="none" stroke="#fff" stroke-width="1.3"/><polygon points="363.4,59.2 360.4,56.8 360.4,61.6" fill="#fff"/><path d="M370.4,57.8 H379.6 M381.6,55.4 V60.4" stroke="#b0b0b0" stroke-width="0.9" fill="none"/><line x1="386.6" y1="49.5" x2="386.6" y2="67.0" stroke="#bdbdbd" stroke-width="0.8"/><line x1="388.8" y1="49.5" x2="388.8" y2="67.0" stroke="#bdbdbd" stroke-width="0.8"/><rect x="391" y="50.0" width="14.2" height="16.4" fill="#fbfbfb" stroke="#d8d8d8" stroke-width="0.5"/><rect x="396.4" y="53.6" width="2.6" height="9" rx="1" fill="#e8e8e8" stroke="#8a8a8a" stroke-width="0.6"/><path d="M396.8,56h1.8M396.8,58h1.8M396.8,60h1.8" stroke="#999" stroke-width="0.4"/><rect x="405.6" y="50.0" width="16.4" height="16.4" fill="#fbfbfb" stroke="#d8d8d8" stroke-width="0.5"/><g transform="translate(410.90 53.00)"><polygon points="3.6,0 4.8,0 5.4,2.8 8.2,5.6 8.2,6.6 5.4,6.6 5.4,9.8 3,9.8 3,6.6 0.2,6.6 0.2,5.6 3,2.8" fill="#e81818"/><path d="M4.2,-1 V11" stroke="#a01010" stroke-width="0.5"/></g><g transform="translate(424.50 52.20)"><path d="M5.4,0.6 H9.4 L12.2,3 V10.6 H5.4 Z" fill="#ececec" stroke="#aaa" stroke-width="0.6"/><path d="M6.6,3.6h4M6.6,5.2h4.4M6.6,6.8h4.4" stroke="#b0b0b0" stroke-width="0.5"/><path d="M0.8,11.6 V6.6 H2.6 V7.6 H6.6 V6.6 H8 V11.6" fill="none" stroke="#111" stroke-width="1"/><ellipse cx="4.6" cy="9.6" rx="2.2" ry="1.5" fill="#7090f0" stroke="#2040c0" stroke-width="0.5"/></g><line x1="441.9" y1="49.5" x2="441.9" y2="67.0" stroke="#bdbdbd" stroke-width="0.8"/><line x1="444.09999999999997" y1="49.5" x2="444.09999999999997" y2="67.0" stroke="#bdbdbd" stroke-width="0.8"/><g transform="translate(448.90 51.60)"><circle cx="5.4" cy="1.6" r="1.4" fill="#111"/><path d="M5,3 L3,6.6 L6.8,8.6 L11.8,12.6 M3,6.6 L0.8,9.8 M4.6,3.8 L1.4,4.4 L0.6,6 M5.6,3.8 L9.4,5.4 L10.6,3.8 M6,7.6 L4,10.4" fill="none" stroke="#111" stroke-width="1.4" stroke-linejoin="round"/></g><g transform="translate(465.80 52.20)"><path d="M1,0.6 V9 H4" fill="none" stroke="#a8a8a8" stroke-width="0.9"/><polygon points="5.4,9 3.4,7.4 3.4,10.6" fill="#a8a8a8"/><path d="M5.6,1.2 H12 V11.6 H7.4" fill="none" stroke="#b4b4b4" stroke-width="0.7"/><path d="M6.8,3.4h4M6.8,5.2h4" stroke="#c0c0c0" stroke-width="0.5"/><rect x="7.4" y="8" width="4" height="3.6" fill="#a8a8a8"/></g><g transform="translate(482.30 52.20)"><rect x="0.3" y="0.3" width="11.6" height="11.4" fill="#a4a4a4"/><rect x="2" y="0.6" width="7.8" height="5.4" fill="#e4e4e4"/></g><g transform="translate(498.60 52.20)"><path d="M5.6,0.6 H10.6 L13,3 V10.6 H5.6 Z" fill="#ececec" stroke="#bcbcbc" stroke-width="0.6" stroke-dasharray="1.2 0.6"/><polygon points="0.4,8.4 4.6,5.6 8.8,8.4 4.6,11.4" fill="#a8a8a8"/><path d="M2,4.6 q2,-3 4.6,-2" fill="none" stroke="#b0b0b0" stroke-width="0.7"/></g><line x1="516.2" y1="50.5" x2="516.2" y2="66.0" stroke="#c6c6c6" stroke-width="0.7"/><line x1="516.9000000000001" y1="50.5" x2="516.9000000000001" y2="66.0" stroke="#ffffff" stroke-width="0.7"/><rect x="519.4" y="50.0" width="16" height="16.4" fill="#fbfbfb" stroke="#d8d8d8" stroke-width="0.5"/><g transform="translate(520.60 52.00)"><path d="M1.4,3.4 Q1.6,1 4,0.8 H9.4 V12 H1.4 Z" fill="#f4f4f4" stroke="#222" stroke-width="0.8"/><rect x="6.4" y="3.4" width="5.4" height="7.4" fill="#111"/><rect x="9.6" y="1" width="1.4" height="2.4" fill="#18a0a0"/><rect x="11.4" y="1.6" width="1.2" height="1.6" fill="#e02020"/><rect x="12" y="5.6" width="1.6" height="3" fill="#e04040"/><path d="M0.4,12.2 H13.4" stroke="#222" stroke-width="0.9"/><path d="M3.6,0.8 V3 H6" fill="none" stroke="#222" stroke-width="0.5"/></g><g transform="translate(539.80 51.60)"><rect x="0.5" y="0.5" width="8" height="12" rx="1.8" fill="#fafafa" stroke="#333" stroke-width="0.8"/><path d="M0.8,10.6 H8.2 V11 Q8.2,12.4 6.6,12.4 H2.4 Q0.8,12.4 0.8,11 Z" fill="#2020e0"/></g><g transform="translate(553.80 52.60)"><path d="M0.4,4.6 V9 A6.2,2.8 0 0 0 12.8,9 V4.6" fill="#9c9c9c" stroke="#111" stroke-width="0.7"/><path d="M0.4,4.6 V9 A6.2,2.8 0 0 0 3,11 V6.8 Z" fill="#a8a820"/><ellipse cx="6.6" cy="4.4" rx="6.2" ry="3.6" fill="#6a6a6a" stroke="#111" stroke-width="0.7"/><ellipse cx="7.2" cy="4.2" rx="3.6" ry="1.9" fill="#2c2c2c"/><path d="M2,3.4 Q4,1 7.6,1.2" fill="none" stroke="#c8c830" stroke-width="0.8"/></g><g transform="translate(570.20 52.20)"><path d="M4.4,8.8 V2.8 Q5.2,1 6,2.8 V8.8 M9.6,8.8 V2.8 Q10.4,1 11.2,2.8 V8.8" fill="#f4f4f4" stroke="#444" stroke-width="0.6"/><path d="M2.6,8.8 H13 V6.4" fill="none" stroke="#222" stroke-width="0.8"/><path d="M1.8,11.2 H13.6" stroke="#111" stroke-width="1.3"/><rect x="0.5" y="5.4" width="2" height="5.4" fill="#e8e8e8" stroke="#222" stroke-width="0.6"/><path d="M2.6,9.8 H13" stroke="#555" stroke-width="0.5"/></g><line x1="588.7" y1="50.5" x2="588.7" y2="66.0" stroke="#c6c6c6" stroke-width="0.7"/><line x1="589.4000000000001" y1="50.5" x2="589.4000000000001" y2="66.0" stroke="#ffffff" stroke-width="0.7"/><rect x="590.6" y="50.0" width="16.6" height="16.4" fill="#fbfbfb" stroke="#d8d8d8" stroke-width="0.5"/><g transform="translate(593.20 53.00)"><polygon points="5.5,0 11,2.6879999999999997 5.5,5.3759999999999994 0,2.6879999999999997" fill="#2828e8" stroke="#000060" stroke-width="0.4"/><polygon points="0,2.6879999999999997 5.5,5.3759999999999994 5.5,11.2 0,8.512" fill="#1010c0" stroke="#000060" stroke-width="0.4"/><polygon points="11,2.6879999999999997 5.5,5.3759999999999994 5.5,11.2 11,8.512" fill="#000078" stroke="#000060" stroke-width="0.4"/></g><g transform="translate(609.60 53.80)"><g transform="scale(0.86)"><polygon points="0,6.6 5.6,3.8 12,6.6 6.2,9.6" fill="#30d030" stroke="#0a700a" stroke-width="0.4"/><polygon points="0,6.6 6.2,9.6 6.2,11.8 0,8.8" fill="#109010" stroke="#0a600a" stroke-width="0.4"/><polygon points="12,6.6 6.2,9.6 6.2,11.8 12,8.8" fill="#0a700a" stroke="#0a600a" stroke-width="0.4"/><polygon points="3.4,3.4 6,2 9,3.4 6.2,4.8" fill="#40e040" stroke="#0a700a" stroke-width="0.4"/><polygon points="3.4,3.4 6.2,4.8 6.2,7.4 3.4,6" fill="#109010"/><polygon points="9,3.4 6.2,4.8 6.2,7.4 9,6" fill="#0a700a"/><polygon points="4.6,1 6,0.2 7.6,1 6.2,1.8" fill="#50f050" stroke="#0a700a" stroke-width="0.3"/><polygon points="4.6,1 6.2,1.8 6.2,3.4 4.6,2.6" fill="#109010"/><polygon points="7.6,1 6.2,1.8 6.2,3.4 7.6,2.6" fill="#0a700a"/></g></g><line x1="625.8" y1="50.5" x2="625.8" y2="66.0" stroke="#c6c6c6" stroke-width="0.7"/><line x1="626.5" y1="50.5" x2="626.5" y2="66.0" stroke="#ffffff" stroke-width="0.7"/><g transform="translate(631.00 53.00)"><polygon points="5.6,0 11.2,2.9 5.6,6 0,2.9" fill="#2020d0" stroke="#000060" stroke-width="0.4"/><polygon points="0,2.9 5.6,6 5.6,10.6 0,7.4" fill="#1818c0" stroke="#000060" stroke-width="0.4"/><polygon points="11.2,2.9 5.6,6 5.6,10.6 11.2,7.4" fill="#000080" stroke="#000060" stroke-width="0.4"/><polygon points="3.2,2.6 6.6,0.9 8.4,1.8 5,3.6" fill="#18b8c8"/><polygon points="5,3.6 8.4,1.8 9.6,2.4 6.2,4.3" fill="#30d030"/><polygon points="6.2,4.3 9.6,2.4 10.4,2.9 7,4.9" fill="#e8e020"/><polygon points="7,4.9 10.4,2.9 10.6,4.6 6.4,7" fill="#e82020"/></g><g transform="translate(646.80 51.60)"><path d="M6.4,0.6 H11 L13.4,3 V11.4 H6.4 Z" fill="#ececec" stroke="#999" stroke-width="0.6" stroke-dasharray="1.2 0.5"/><path d="M7.6,3.6h4M7.6,5.4h4.4M7.6,7.2h4.4" stroke="#aaa" stroke-width="0.5"/></g><g transform="translate(646.80 56.80)"><polygon points="3.6,0 7.2,1.8239999999999998 3.6,3.6479999999999997 0,1.8239999999999998" fill="#28c8e8" stroke="#333" stroke-width="0.25"/><polygon points="0,1.8239999999999998 3.6,3.6479999999999997 3.6,7.6 0,5.776" fill="#e81818" stroke="#333" stroke-width="0.25"/><polygon points="7.2,1.8239999999999998 3.6,3.6479999999999997 3.6,7.6 7.2,5.776" fill="#2020e0" stroke="#333" stroke-width="0.25"/></g><path d="M670.4,54.4 L680,62" stroke="#a8a8a8" stroke-width="3.6"/><line x1="4" y1="70.9" x2="171.5" y2="70.9" stroke="#cacaca" stroke-width="0.8"/><line x1="4" y1="72.7" x2="171.5" y2="72.7" stroke="#cacaca" stroke-width="0.8"/><path d="M174,70.6 l2.6,2.8 m0,-2.8 l-2.6,2.8" stroke="#444" stroke-width="0.8" fill="none"/><line x1="15.5" y1="77" x2="15.5" y2="280.4" stroke="#d8d8d8" stroke-width="0.6" opacity="0.8"/><line x1="47.6" y1="77" x2="47.6" y2="280.4" stroke="#d8d8d8" stroke-width="0.6" opacity="0.8"/><line x1="105.6" y1="77" x2="105.6" y2="280.4" stroke="#d8d8d8" stroke-width="0.6" opacity="0.8"/><line x1="124.6" y1="77" x2="124.6" y2="280.4" stroke="#d8d8d8" stroke-width="0.6" opacity="0.8"/><line x1="160.2" y1="77" x2="160.2" y2="280.4" stroke="#d8d8d8" stroke-width="0.6" opacity="0.8"/><line x1="6" y1="123.20" x2="174.4" y2="123.20" stroke="#e0e0e0" stroke-width="0.6"/><line x1="6" y1="187.95" x2="174.4" y2="187.95" stroke="#e0e0e0" stroke-width="0.6"/><line x1="6" y1="252.70" x2="174.4" y2="252.70" stroke="#e0e0e0" stroke-width="0.6"/><line x1="6" y1="280.45" x2="174.4" y2="280.45" stroke="#e0e0e0" stroke-width="0.6"/><g transform="translate(7.40 87.10) scale(0.82 0.9)"><path d="M1.6,1 L2.6,2 H5 L6,1 L6.4,1.6 L5.7,2.8 Q6.5,4.6 5.6,6.4 Q3.8,8 2,6.4 Q1.1,4.6 1.9,2.8 L1.2,1.6 Z" fill="#8a90c0" stroke="#10183c" stroke-width="0.8"/><circle cx="3.8" cy="4.5" r="1.3" fill="#e4e6f4" stroke="#10183c" stroke-width="0.4"/></g><g transform="translate(6.50 95.85)"><ellipse cx="4" cy="4.9" rx="3.5" ry="2.9" fill="#f0f0f0" stroke="#1a1a1a" stroke-width="0.8"/><path d="M0.9,3.6 Q3.8,0.2 7,3" fill="none" stroke="#1a1a1a" stroke-width="0.9"/><path d="M1.4,5.6 Q4,8 6.8,5.8 L6.4,4.8 H2.2 Z" fill="#333"/><path d="M3.4,4.4 H6.8" stroke="#e01818" stroke-width="0.9"/><path d="M0.4,0.8 L2,1.8" stroke="#e01818" stroke-width="0.8"/></g><g transform="translate(7.40 105.60) scale(0.82 0.9)"><path d="M1.6,0.8 L2.6,1.6 H5 L6,0.8 L6.4,1.6 L5.8,3 Q6.4,5.2 5,6.6 L3.8,8 L2.6,6.6 Q1.2,5.2 1.8,3 L1.2,1.6 Z" fill="#7a80b0" stroke="#10183c" stroke-width="0.8"/><path d="M4.8,2.2 L3,6" stroke="#f4f4fa" stroke-width="0.9"/><path d="M3.2,2.2 L4.4,4" stroke="#d0d4ee" stroke-width="0.5"/></g><g transform="translate(6.50 114.35)"><ellipse cx="4" cy="4.9" rx="3.5" ry="2.9" fill="#f0f0f0" stroke="#1a1a1a" stroke-width="0.8"/><path d="M0.9,3.6 Q3.8,0.2 7,3" fill="none" stroke="#1a1a1a" stroke-width="0.9"/><path d="M1.4,5.6 Q4,8 6.8,5.8 L6.4,4.8 H2.2 Z" fill="#333"/><path d="M3.4,4.4 H6.8" stroke="#e01818" stroke-width="0.9"/><path d="M0.4,0.8 L2,1.8" stroke="#e01818" stroke-width="0.8"/></g><g transform="translate(6.50 123.60)"><path d="M0.6,5.2 L2.6,3.8 L3.4,5 L4.6,3.6 L5.6,4.8 L7.4,4.4 L7.4,6.4 L4.4,7.8 L0.6,6.8 Z" fill="#3a3a3a" stroke="#1a1a1a" stroke-width="0.5"/><path d="M2,1.6 L3.2,4.4 M5.4,1.4 L4.6,4" stroke="#222" stroke-width="0.7"/><path d="M3.9,0.2 V4.6" stroke="#e01818" stroke-width="0.9"/><path d="M1.6,5.8 L4.2,6.6 L6.6,5.6" fill="none" stroke="#d8d8d8" stroke-width="0.5"/></g><g transform="translate(7.40 133.35) scale(0.82 0.9)"><path d="M1.6,0.8 L2.6,1.6 H5 L6,0.8 L6.4,1.6 L5.8,3 Q6.4,5.2 5,6.6 L3.8,8 L2.6,6.6 Q1.2,5.2 1.8,3 L1.2,1.6 Z" fill="#7a80b0" stroke="#10183c" stroke-width="0.8"/><path d="M4.8,2.2 L3,6" stroke="#f4f4fa" stroke-width="0.9"/><path d="M3.2,2.2 L4.4,4" stroke="#d0d4ee" stroke-width="0.5"/></g><g transform="translate(6.50 142.10)"><path d="M0.6,5.2 L2.6,3.8 L3.4,5 L4.6,3.6 L5.6,4.8 L7.4,4.4 L7.4,6.4 L4.4,7.8 L0.6,6.8 Z" fill="#3a3a3a" stroke="#1a1a1a" stroke-width="0.5"/><path d="M2,1.6 L3.2,4.4 M5.4,1.4 L4.6,4" stroke="#222" stroke-width="0.7"/><path d="M3.9,0.2 V4.6" stroke="#e01818" stroke-width="0.9"/><path d="M1.6,5.8 L4.2,6.6 L6.6,5.6" fill="none" stroke="#d8d8d8" stroke-width="0.5"/></g><g transform="translate(7.40 151.85) scale(0.82 0.9)"><path d="M1.6,1 L2.6,2 H5 L6,1 L6.4,1.6 L5.7,2.8 Q6.5,4.6 5.6,6.4 Q3.8,8 2,6.4 Q1.1,4.6 1.9,2.8 L1.2,1.6 Z" fill="#8a90c0" stroke="#10183c" stroke-width="0.8"/><circle cx="3.8" cy="4.5" r="1.3" fill="#e4e6f4" stroke="#10183c" stroke-width="0.4"/></g><g transform="translate(6.50 160.60)"><ellipse cx="4" cy="4.9" rx="3.5" ry="2.9" fill="#f0f0f0" stroke="#1a1a1a" stroke-width="0.8"/><path d="M0.9,3.6 Q3.8,0.2 7,3" fill="none" stroke="#1a1a1a" stroke-width="0.9"/><path d="M1.4,5.6 Q4,8 6.8,5.8 L6.4,4.8 H2.2 Z" fill="#333"/><path d="M3.4,4.4 H6.8" stroke="#e01818" stroke-width="0.9"/><path d="M0.4,0.8 L2,1.8" stroke="#e01818" stroke-width="0.8"/></g><g transform="translate(162.00 163.10)"><polygon points="0,2.6 3,0.2 6,2.6 3,3.6" fill="#20b820"/><polygon points="0,2.6 3,3.6 6,2.6 4.6,4.2 3,4.7 1.4,4.2" fill="#102060"/><polygon points="1.6,1.6 3,0 4.4,1.6 3,2.2" fill="#40e040"/></g><g transform="translate(7.40 170.35) scale(0.82 0.9)"><path d="M1.6,0.8 L2.6,1.6 H5 L6,0.8 L6.4,1.6 L5.8,3 Q6.4,5.2 5,6.6 L3.8,8 L2.6,6.6 Q1.2,5.2 1.8,3 L1.2,1.6 Z" fill="#7a80b0" stroke="#10183c" stroke-width="0.8"/><path d="M4.8,2.2 L3,6" stroke="#f4f4fa" stroke-width="0.9"/><path d="M3.2,2.2 L4.4,4" stroke="#d0d4ee" stroke-width="0.5"/></g><g transform="translate(6.50 179.10)"><ellipse cx="4" cy="4.9" rx="3.5" ry="2.9" fill="#f0f0f0" stroke="#1a1a1a" stroke-width="0.8"/><path d="M0.9,3.6 Q3.8,0.2 7,3" fill="none" stroke="#1a1a1a" stroke-width="0.9"/><path d="M1.4,5.6 Q4,8 6.8,5.8 L6.4,4.8 H2.2 Z" fill="#333"/><path d="M3.4,4.4 H6.8" stroke="#e01818" stroke-width="0.9"/><path d="M0.4,0.8 L2,1.8" stroke="#e01818" stroke-width="0.8"/></g><g transform="translate(162.00 181.60)"><polygon points="0,2.6 3,0.2 6,2.6 3,3.6" fill="#20b820"/><polygon points="0,2.6 3,3.6 6,2.6 4.6,4.2 3,4.7 1.4,4.2" fill="#102060"/><polygon points="1.6,1.6 3,0 4.4,1.6 3,2.2" fill="#40e040"/></g><g transform="translate(6.50 188.35)"><path d="M0.6,5.2 L2.6,3.8 L3.4,5 L4.6,3.6 L5.6,4.8 L7.4,4.4 L7.4,6.4 L4.4,7.8 L0.6,6.8 Z" fill="#3a3a3a" stroke="#1a1a1a" stroke-width="0.5"/><path d="M2,1.6 L3.2,4.4 M5.4,1.4 L4.6,4" stroke="#222" stroke-width="0.7"/><path d="M3.9,0.2 V4.6" stroke="#e01818" stroke-width="0.9"/><path d="M1.6,5.8 L4.2,6.6 L6.6,5.6" fill="none" stroke="#d8d8d8" stroke-width="0.5"/></g><g transform="translate(162.00 190.85)"><polygon points="0,2.6 3,0.2 6,2.6 3,3.6" fill="#20b820"/><polygon points="0,2.6 3,3.6 6,2.6 4.6,4.2 3,4.7 1.4,4.2" fill="#102060"/><polygon points="1.6,1.6 3,0 4.4,1.6 3,2.2" fill="#40e040"/></g><g transform="translate(7.40 198.10) scale(0.82 0.9)"><path d="M1.6,0.8 L2.6,1.6 H5 L6,0.8 L6.4,1.6 L5.8,3 Q6.4,5.2 5,6.6 L3.8,8 L2.6,6.6 Q1.2,5.2 1.8,3 L1.2,1.6 Z" fill="#7a80b0" stroke="#10183c" stroke-width="0.8"/><path d="M4.8,2.2 L3,6" stroke="#f4f4fa" stroke-width="0.9"/><path d="M3.2,2.2 L4.4,4" stroke="#d0d4ee" stroke-width="0.5"/></g><g transform="translate(6.50 206.85)"><path d="M0.6,5.2 L2.6,3.8 L3.4,5 L4.6,3.6 L5.6,4.8 L7.4,4.4 L7.4,6.4 L4.4,7.8 L0.6,6.8 Z" fill="#3a3a3a" stroke="#1a1a1a" stroke-width="0.5"/><path d="M2,1.6 L3.2,4.4 M5.4,1.4 L4.6,4" stroke="#222" stroke-width="0.7"/><path d="M3.9,0.2 V4.6" stroke="#e01818" stroke-width="0.9"/><path d="M1.6,5.8 L4.2,6.6 L6.6,5.6" fill="none" stroke="#d8d8d8" stroke-width="0.5"/></g><g transform="translate(162.00 209.35)"><polygon points="0,2.6 3,0.2 6,2.6 3,3.6" fill="#20b820"/><polygon points="0,2.6 3,3.6 6,2.6 4.6,4.2 3,4.7 1.4,4.2" fill="#102060"/><polygon points="1.6,1.6 3,0 4.4,1.6 3,2.2" fill="#40e040"/></g><g transform="translate(7.40 216.60) scale(0.82 0.9)"><path d="M1.6,1 L2.6,2 H5 L6,1 L6.4,1.6 L5.7,2.8 Q6.5,4.6 5.6,6.4 Q3.8,8 2,6.4 Q1.1,4.6 1.9,2.8 L1.2,1.6 Z" fill="#8a90c0" stroke="#10183c" stroke-width="0.8"/><circle cx="3.8" cy="4.5" r="1.3" fill="#e4e6f4" stroke="#10183c" stroke-width="0.4"/></g><g transform="translate(6.50 225.35)"><ellipse cx="4" cy="4.9" rx="3.5" ry="2.9" fill="#f0f0f0" stroke="#1a1a1a" stroke-width="0.8"/><path d="M0.9,3.6 Q3.8,0.2 7,3" fill="none" stroke="#1a1a1a" stroke-width="0.9"/><path d="M1.4,5.6 Q4,8 6.8,5.8 L6.4,4.8 H2.2 Z" fill="#333"/><path d="M3.4,4.4 H6.8" stroke="#e01818" stroke-width="0.9"/><path d="M0.4,0.8 L2,1.8" stroke="#e01818" stroke-width="0.8"/></g><g transform="translate(162.00 227.85)"><polygon points="0,2.6 3,0.2 6,2.6 3,3.6" fill="#20b820"/><polygon points="0,2.6 3,3.6 6,2.6 4.6,4.2 3,4.7 1.4,4.2" fill="#102060"/><polygon points="1.6,1.6 3,0 4.4,1.6 3,2.2" fill="#40e040"/></g><g transform="translate(7.40 235.10) scale(0.82 0.9)"><path d="M1.6,0.8 L2.6,1.6 H5 L6,0.8 L6.4,1.6 L5.8,3 Q6.4,5.2 5,6.6 L3.8,8 L2.6,6.6 Q1.2,5.2 1.8,3 L1.2,1.6 Z" fill="#7a80b0" stroke="#10183c" stroke-width="0.8"/><path d="M4.8,2.2 L3,6" stroke="#f4f4fa" stroke-width="0.9"/><path d="M3.2,2.2 L4.4,4" stroke="#d0d4ee" stroke-width="0.5"/></g><g transform="translate(6.50 243.85)"><ellipse cx="4" cy="4.9" rx="3.5" ry="2.9" fill="#f0f0f0" stroke="#1a1a1a" stroke-width="0.8"/><path d="M0.9,3.6 Q3.8,0.2 7,3" fill="none" stroke="#1a1a1a" stroke-width="0.9"/><path d="M1.4,5.6 Q4,8 6.8,5.8 L6.4,4.8 H2.2 Z" fill="#333"/><path d="M3.4,4.4 H6.8" stroke="#e01818" stroke-width="0.9"/><path d="M0.4,0.8 L2,1.8" stroke="#e01818" stroke-width="0.8"/></g><g transform="translate(162.00 246.35)"><polygon points="0,2.6 3,0.2 6,2.6 3,3.6" fill="#20b820"/><polygon points="0,2.6 3,3.6 6,2.6 4.6,4.2 3,4.7 1.4,4.2" fill="#102060"/><polygon points="1.6,1.6 3,0 4.4,1.6 3,2.2" fill="#40e040"/></g><g transform="translate(6.50 253.10)"><path d="M0.6,5.2 L2.6,3.8 L3.4,5 L4.6,3.6 L5.6,4.8 L7.4,4.4 L7.4,6.4 L4.4,7.8 L0.6,6.8 Z" fill="#3a3a3a" stroke="#1a1a1a" stroke-width="0.5"/><path d="M2,1.6 L3.2,4.4 M5.4,1.4 L4.6,4" stroke="#222" stroke-width="0.7"/><path d="M3.9,0.2 V4.6" stroke="#e01818" stroke-width="0.9"/><path d="M1.6,5.8 L4.2,6.6 L6.6,5.6" fill="none" stroke="#d8d8d8" stroke-width="0.5"/></g><g transform="translate(162.00 255.60)"><polygon points="0,2.6 3,0.2 6,2.6 3,3.6" fill="#20b820"/><polygon points="0,2.6 3,3.6 6,2.6 4.6,4.2 3,4.7 1.4,4.2" fill="#102060"/><polygon points="1.6,1.6 3,0 4.4,1.6 3,2.2" fill="#40e040"/></g><g transform="translate(7.40 262.85) scale(0.82 0.9)"><path d="M1.6,0.8 L2.6,1.6 H5 L6,0.8 L6.4,1.6 L5.8,3 Q6.4,5.2 5,6.6 L3.8,8 L2.6,6.6 Q1.2,5.2 1.8,3 L1.2,1.6 Z" fill="#7a80b0" stroke="#10183c" stroke-width="0.8"/><path d="M4.8,2.2 L3,6" stroke="#f4f4fa" stroke-width="0.9"/><path d="M3.2,2.2 L4.4,4" stroke="#d0d4ee" stroke-width="0.5"/></g><g transform="translate(6.50 271.60)"><path d="M0.6,5.2 L2.6,3.8 L3.4,5 L4.6,3.6 L5.6,4.8 L7.4,4.4 L7.4,6.4 L4.4,7.8 L0.6,6.8 Z" fill="#3a3a3a" stroke="#1a1a1a" stroke-width="0.5"/><path d="M2,1.6 L3.2,4.4 M5.4,1.4 L4.6,4" stroke="#222" stroke-width="0.7"/><path d="M3.9,0.2 V4.6" stroke="#e01818" stroke-width="0.9"/><path d="M1.6,5.8 L4.2,6.6 L6.6,5.6" fill="none" stroke="#d8d8d8" stroke-width="0.5"/></g><g transform="translate(162.00 274.10)"><polygon points="0,2.6 3,0.2 6,2.6 3,3.6" fill="#20b820"/><polygon points="0,2.6 3,3.6 6,2.6 4.6,4.2 3,4.7 1.4,4.2" fill="#102060"/><polygon points="1.6,1.6 3,0 4.4,1.6 3,2.2" fill="#40e040"/></g><rect x="6" y="416.6" width="169.5" height="8.6" fill="#f0f0f0"/><rect x="15.3" y="417.4" width="121.2" height="7" fill="#cdcdcd"/><path d="M11,418.6 l-2,2.2 l2,2.2 M168.6,418.6 l2,2.2 l-2,2.2" stroke="#555" stroke-width="0.8" fill="none"/><rect x="12" y="428.79999999999995" width="6" height="5.6" fill="#2a3a90" stroke="#141c50" stroke-width="0.5"/><rect x="13.2" y="430.59999999999997" width="3.6" height="2.6" fill="#e8ecff"/><path d="M12.4,429.7h5.2" stroke="#9ab0ff" stroke-width="0.6"/><rect x="38.2" y="428.59999999999997" width="5.4" height="1.5" fill="#2a48d0"/><rect x="38.4" y="429.79999999999995" width="1.8" height="5" fill="#222838"/><rect x="40.8" y="430.59999999999997" width="2.6" height="4" fill="#fff" stroke="#333" stroke-width="0.5"/><path d="M37.8,434.79999999999995 H43.8" stroke="#222" stroke-width="0.6"/><polygon points="64.8,430.79999999999995 68,429.0 71.2,430.79999999999995 68,432.59999999999997" fill="#3a4a9a" stroke="#101830" stroke-width="0.5"/><polygon points="64.8,430.79999999999995 68,432.59999999999997 68,435.0 64.8,433.2" fill="#1a2040"/><polygon points="71.2,430.79999999999995 68,432.59999999999997 68,435.0 71.2,433.2" fill="#0c1020"/><path d="M66.4,431.0 L69.6,430.0" stroke="#e8e8ff" stroke-width="0.6"/><rect x="118" y="429.59999999999997" width="5" height="3.6" rx="0.8" fill="#fff" stroke="#18a018" stroke-width="0.8"/><path d="M119,433.79999999999995 h0.8 M121.4,433.79999999999995 h0.8" stroke="#e01818" stroke-width="0.8"/><polygon points="144.4,429.79999999999995 147,428.79999999999995 149.8,429.79999999999995 147.2,431.0" fill="#f0d020"/><polygon points="144.4,429.79999999999995 147.2,431.0 147.2,434.79999999999995 144.4,433.4" fill="#e02020"/><polygon points="149.8,429.79999999999995 147.2,431.0 147.2,434.79999999999995 149.8,433.4" fill="#2030d0"/><line x1="184" y1="304.5" x2="680" y2="172.3" stroke="#ffff8c" stroke-width="1.1"/><line x1="445.2" y1="69" x2="445.2" y2="440" stroke="#ffff8c" stroke-width="1.1"/><line x1="311.4" y1="68.5" x2="607.4" y2="438.6" stroke="#ffff8c" stroke-width="1.1"/><defs><linearGradient id="side" x1="0" x2="1" y1="0" y2="0"><stop offset="0" stop-color="#5a5a5a"/><stop offset="0.12" stop-color="#7c7c7c"/><stop offset="0.3" stop-color="#a4a4a4"/><stop offset="0.5" stop-color="#8a8a8a"/><stop offset="0.75" stop-color="#5c5c5c"/><stop offset="0.92" stop-color="#343434"/><stop offset="1" stop-color="#2a2a2a"/></linearGradient><linearGradient id="top" x1="0" x2="1" y1="0" y2="1"><stop offset="0" stop-color="#aeaeae"/><stop offset="1" stop-color="#9a9a9a"/></linearGradient></defs><path d="M400.70000000000005,234.8 L400.70000000000005,254.10000000000002 A44.9,25.7 0 0 0 490.5,254.10000000000002 L490.5,234.8 Z" fill="url(#side)"/><ellipse cx="445.6" cy="234.8" rx="44.9" ry="25.7" fill="url(#top)" stroke="#7a7a7a" stroke-width="0.5"/><path d="M400.70000000000005,234.8 A44.9,25.7 0 0 0 490.5,234.8" fill="none" stroke="#5c5c5c" stroke-width="0.7" opacity="0.8"/><g opacity="0.9"><line x1="398.70000000000005" y1="247.2" x2="492.5" y2="222.2" stroke="#ffff8c" stroke-width="0.9"/><line x1="445.2" y1="205" x2="445.2" y2="234.9" stroke="#ffff8c" stroke-width="0.9"/><line x1="418" y1="201.8" x2="476" y2="274.3" stroke="#ffff8c" stroke-width="0.9"/></g><rect x="414.10" y="219.40" width="43.8" height="8.2" rx="4.1" ry="4.1" transform="rotate(-12.13 436.00 223.50)" fill="#808080" stroke="#2020e8" stroke-width="1.4" /><rect x="415.60" y="220.00" width="41.4" height="5.4" rx="2.7" ry="2.7" transform="rotate(-12.13 436.30 222.70)" fill="none" stroke="#2828e0" stroke-width="1.0" /><polygon points="418.9,227.7 454.4,220.1 454.4,222.7 418.9,230.3" fill="#e81c1c" /><line x1="436.1" y1="205.5" x2="436.1" y2="223.9" stroke="#f01818" stroke-width="1" stroke-dasharray="5 1.2 1.2 1.2"/><line x1="436.1" y1="205.5" x2="436.1" y2="208.5" stroke="#f01818" stroke-width="1.3"/><circle cx="438.0" cy="225.6" r="1.25" fill="#1010d0"/><line x1="424.9" y1="240.3" x2="465.4" y2="229.6" stroke="#f040f0" stroke-width="0.7" stroke-dasharray="3 1.5 1 1.5" opacity="0.7"/><ellipse cx="424.9" cy="240.4" rx="6.1" ry="3.5" fill="#6a6a6a" stroke="#e81c1c" stroke-width="1.4"/><ellipse cx="425.2" cy="240.9" rx="3.6" ry="1.9" fill="none" stroke="#e04040" stroke-width="0.6"/><circle cx="424.4" cy="240.7" r="0.8" fill="#e0c040"/><ellipse cx="465.4" cy="229.7" rx="6.1" ry="3.5" fill="#6a6a6a" stroke="#e81c1c" stroke-width="1.4"/><ellipse cx="465.7" cy="230.2" rx="3.6" ry="1.9" fill="none" stroke="#e04040" stroke-width="0.6"/><circle cx="464.9" cy="230.0" r="0.8" fill="#e0c040"/><rect x="618.40" y="174.25" width="43.6" height="6.5" rx="3.25" ry="3.25" transform="rotate(-12.13 640.20 177.50)" fill="none" stroke="#3a3af0" stroke-width="0.7" /><line x1="619.2" y1="176.6" x2="619.2" y2="184.8" stroke="#3a3af0" stroke-width="0.6"/><line x1="660.6" y1="167.7" x2="660.6" y2="175.9" stroke="#3a3af0" stroke-width="0.6"/><line x1="641.2" y1="171.8" x2="641.2" y2="180.0" stroke="#3a3af0" stroke-width="0.6"/><line x1="652.0" y1="169.5" x2="652.0" y2="177.7" stroke="#3a3af0" stroke-width="0.6"/><polygon points="622.5,177.1 657.5,169.5 657.5,174.1 622.5,181.7" fill="#f03838" opacity="0.8"/><line x1="624.0" y1="176.9" x2="624.0" y2="181.1" stroke="#fff" stroke-width="0.35" opacity="0.7"/><line x1="626.0" y1="176.5" x2="626.0" y2="180.7" stroke="#fff" stroke-width="0.35" opacity="0.7"/><line x1="628.0" y1="176.1" x2="628.0" y2="180.3" stroke="#fff" stroke-width="0.35" opacity="0.7"/><line x1="630.0" y1="175.7" x2="630.0" y2="179.9" stroke="#fff" stroke-width="0.35" opacity="0.7"/><line x1="632.0" y1="175.2" x2="632.0" y2="179.4" stroke="#fff" stroke-width="0.35" opacity="0.7"/><line x1="634.0" y1="174.8" x2="634.0" y2="179.0" stroke="#fff" stroke-width="0.35" opacity="0.7"/><line x1="636.0" y1="174.4" x2="636.0" y2="178.6" stroke="#fff" stroke-width="0.35" opacity="0.7"/><line x1="638.0" y1="173.9" x2="638.0" y2="178.1" stroke="#fff" stroke-width="0.35" opacity="0.7"/><line x1="640.0" y1="173.5" x2="640.0" y2="177.7" stroke="#fff" stroke-width="0.35" opacity="0.7"/><line x1="642.0" y1="173.1" x2="642.0" y2="177.3" stroke="#fff" stroke-width="0.35" opacity="0.7"/><line x1="644.0" y1="172.6" x2="644.0" y2="176.8" stroke="#fff" stroke-width="0.35" opacity="0.7"/><line x1="646.0" y1="172.2" x2="646.0" y2="176.4" stroke="#fff" stroke-width="0.35" opacity="0.7"/><line x1="648.0" y1="171.8" x2="648.0" y2="176.0" stroke="#fff" stroke-width="0.35" opacity="0.7"/><line x1="650.0" y1="171.4" x2="650.0" y2="175.6" stroke="#fff" stroke-width="0.35" opacity="0.7"/><line x1="652.0" y1="170.9" x2="652.0" y2="175.1" stroke="#fff" stroke-width="0.35" opacity="0.7"/><line x1="654.0" y1="170.5" x2="654.0" y2="174.7" stroke="#fff" stroke-width="0.35" opacity="0.7"/><line x1="656.0" y1="170.1" x2="656.0" y2="174.3" stroke="#fff" stroke-width="0.35" opacity="0.7"/><polygon points="622.2,173.1 657.8,165.5 657.8,168.1 622.2,175.7" fill="#f02020" /><rect x="618.20" y="166.45" width="43.6" height="6.5" rx="3.25" ry="3.25" transform="rotate(-12.13 640.00 169.70)" fill="none" stroke="#2626ee" stroke-width="1.4" /><line x1="640.1" y1="151.9" x2="640.1" y2="170.3" stroke="#f01818" stroke-width="1" stroke-dasharray="5 1.2 1.2 1.2"/><line x1="640.1" y1="151.9" x2="640.1" y2="154.9" stroke="#f01818" stroke-width="1.3"/><circle cx="642.0" cy="172.0" r="1.25" fill="#1010d0"/><line x1="628.9" y1="186.7" x2="669.4" y2="176.0" stroke="#f040f0" stroke-width="0.7" stroke-dasharray="3 1.5 1 1.5" opacity="0.7"/><ellipse cx="628.9" cy="186.8" rx="6" ry="3.3" fill="none" stroke="#f02020" stroke-width="1.1"/><ellipse cx="628.9" cy="187.6" rx="4.6" ry="2.3" fill="none" stroke="#f04040" stroke-width="0.5"/><ellipse cx="628.9" cy="204.4" rx="5.3" ry="3.0" fill="none" stroke="#f02020" stroke-width="0.9"/><line x1="623.6" y1="187.8" x2="623.6" y2="204.4" stroke="#f03030" stroke-width="0.6"/><line x1="625.7" y1="187.8" x2="625.7" y2="204.4" stroke="#f03030" stroke-width="0.6"/><line x1="632.1" y1="187.8" x2="632.1" y2="204.4" stroke="#f03030" stroke-width="0.6"/><line x1="634.2" y1="187.8" x2="634.2" y2="204.4" stroke="#f03030" stroke-width="0.6"/><line x1="628.9" y1="188.8" x2="628.9" y2="202.4" stroke="#f050f0" stroke-width="0.6" stroke-dasharray="2 1.5"/><polyline points="625.4,202.9 628.9,206.6 632.4,202.9" fill="none" stroke="#f03030" stroke-width="0.6"/><ellipse cx="669.4" cy="176.1" rx="6" ry="3.3" fill="none" stroke="#f02020" stroke-width="1.1"/><ellipse cx="669.4" cy="176.9" rx="4.6" ry="2.3" fill="none" stroke="#f04040" stroke-width="0.5"/><ellipse cx="669.4" cy="193.7" rx="5.3" ry="3.0" fill="none" stroke="#f02020" stroke-width="0.9"/><line x1="664.1" y1="177.1" x2="664.1" y2="193.7" stroke="#f03030" stroke-width="0.6"/><line x1="666.2" y1="177.1" x2="666.2" y2="193.7" stroke="#f03030" stroke-width="0.6"/><line x1="672.6" y1="177.1" x2="672.6" y2="193.7" stroke="#f03030" stroke-width="0.6"/><line x1="674.7" y1="177.1" x2="674.7" y2="193.7" stroke="#f03030" stroke-width="0.6"/><line x1="669.4" y1="178.1" x2="669.4" y2="191.7" stroke="#f050f0" stroke-width="0.6" stroke-dasharray="2 1.5"/><polyline points="665.9,192.2 669.4,195.9 672.9,192.2" fill="none" stroke="#f03030" stroke-width="0.6"/><rect x="210.40" y="282.25" width="43.6" height="6.5" rx="3.25" ry="3.25" transform="rotate(-12.13 232.20 285.50)" fill="none" stroke="#3a3af0" stroke-width="0.7" /><line x1="211.2" y1="284.6" x2="211.2" y2="292.8" stroke="#3a3af0" stroke-width="0.6"/><line x1="252.6" y1="275.7" x2="252.6" y2="283.9" stroke="#3a3af0" stroke-width="0.6"/><line x1="233.2" y1="279.8" x2="233.2" y2="288.0" stroke="#3a3af0" stroke-width="0.6"/><line x1="244.0" y1="277.5" x2="244.0" y2="285.7" stroke="#3a3af0" stroke-width="0.6"/><polygon points="214.5,285.1 249.5,277.5 249.5,282.1 214.5,289.7" fill="#f03838" opacity="0.8"/><line x1="216.0" y1="284.9" x2="216.0" y2="289.1" stroke="#fff" stroke-width="0.35" opacity="0.7"/><line x1="218.0" y1="284.5" x2="218.0" y2="288.7" stroke="#fff" stroke-width="0.35" opacity="0.7"/><line x1="220.0" y1="284.1" x2="220.0" y2="288.3" stroke="#fff" stroke-width="0.35" opacity="0.7"/><line x1="222.0" y1="283.6" x2="222.0" y2="287.8" stroke="#fff" stroke-width="0.35" opacity="0.7"/><line x1="224.0" y1="283.2" x2="224.0" y2="287.4" stroke="#fff" stroke-width="0.35" opacity="0.7"/><line x1="226.0" y1="282.8" x2="226.0" y2="287.0" stroke="#fff" stroke-width="0.35" opacity="0.7"/><line x1="228.0" y1="282.4" x2="228.0" y2="286.6" stroke="#fff" stroke-width="0.35" opacity="0.7"/><line x1="230.0" y1="281.9" x2="230.0" y2="286.1" stroke="#fff" stroke-width="0.35" opacity="0.7"/><line x1="232.0" y1="281.5" x2="232.0" y2="285.7" stroke="#fff" stroke-width="0.35" opacity="0.7"/><line x1="234.0" y1="281.1" x2="234.0" y2="285.3" stroke="#fff" stroke-width="0.35" opacity="0.7"/><line x1="236.0" y1="280.6" x2="236.0" y2="284.8" stroke="#fff" stroke-width="0.35" opacity="0.7"/><line x1="238.0" y1="280.2" x2="238.0" y2="284.4" stroke="#fff" stroke-width="0.35" opacity="0.7"/><line x1="240.0" y1="279.8" x2="240.0" y2="284.0" stroke="#fff" stroke-width="0.35" opacity="0.7"/><line x1="242.0" y1="279.3" x2="242.0" y2="283.6" stroke="#fff" stroke-width="0.35" opacity="0.7"/><line x1="244.0" y1="278.9" x2="244.0" y2="283.1" stroke="#fff" stroke-width="0.35" opacity="0.7"/><line x1="246.0" y1="278.5" x2="246.0" y2="282.7" stroke="#fff" stroke-width="0.35" opacity="0.7"/><line x1="248.0" y1="278.1" x2="248.0" y2="282.3" stroke="#fff" stroke-width="0.35" opacity="0.7"/><polygon points="214.2,281.1 249.8,273.5 249.8,276.1 214.2,283.7" fill="#f02020" /><rect x="210.20" y="274.45" width="43.6" height="6.5" rx="3.25" ry="3.25" transform="rotate(-12.13 232.00 277.70)" fill="none" stroke="#2626ee" stroke-width="1.4" /><line x1="232.1" y1="259.9" x2="232.1" y2="278.3" stroke="#f01818" stroke-width="1" stroke-dasharray="5 1.2 1.2 1.2"/><line x1="232.1" y1="259.9" x2="232.1" y2="262.9" stroke="#f01818" stroke-width="1.3"/><circle cx="234.0" cy="280.0" r="1.25" fill="#1010d0"/><line x1="220.9" y1="294.7" x2="261.4" y2="284.0" stroke="#f040f0" stroke-width="0.7" stroke-dasharray="3 1.5 1 1.5" opacity="0.7"/><ellipse cx="220.9" cy="294.8" rx="6" ry="3.3" fill="none" stroke="#f02020" stroke-width="1.1"/><ellipse cx="220.9" cy="295.6" rx="4.6" ry="2.3" fill="none" stroke="#f04040" stroke-width="0.5"/><ellipse cx="220.9" cy="312.4" rx="5.3" ry="3.0" fill="none" stroke="#f02020" stroke-width="0.9"/><line x1="215.6" y1="295.8" x2="215.6" y2="312.4" stroke="#f03030" stroke-width="0.6"/><line x1="217.7" y1="295.8" x2="217.7" y2="312.4" stroke="#f03030" stroke-width="0.6"/><line x1="224.1" y1="295.8" x2="224.1" y2="312.4" stroke="#f03030" stroke-width="0.6"/><line x1="226.2" y1="295.8" x2="226.2" y2="312.4" stroke="#f03030" stroke-width="0.6"/><line x1="220.9" y1="296.8" x2="220.9" y2="310.4" stroke="#f050f0" stroke-width="0.6" stroke-dasharray="2 1.5"/><polyline points="217.4,310.9 220.9,314.6 224.4,310.9" fill="none" stroke="#f03030" stroke-width="0.6"/><ellipse cx="261.4" cy="284.1" rx="6" ry="3.3" fill="none" stroke="#f02020" stroke-width="1.1"/><ellipse cx="261.4" cy="284.9" rx="4.6" ry="2.3" fill="none" stroke="#f04040" stroke-width="0.5"/><ellipse cx="261.4" cy="301.7" rx="5.3" ry="3.0" fill="none" stroke="#f02020" stroke-width="0.9"/><line x1="256.1" y1="285.1" x2="256.1" y2="301.7" stroke="#f03030" stroke-width="0.6"/><line x1="258.2" y1="285.1" x2="258.2" y2="301.7" stroke="#f03030" stroke-width="0.6"/><line x1="264.6" y1="285.1" x2="264.6" y2="301.7" stroke="#f03030" stroke-width="0.6"/><line x1="266.7" y1="285.1" x2="266.7" y2="301.7" stroke="#f03030" stroke-width="0.6"/><line x1="261.4" y1="286.1" x2="261.4" y2="299.7" stroke="#f050f0" stroke-width="0.6" stroke-dasharray="2 1.5"/><polyline points="257.9,300.2 261.4,303.9 264.9,300.2" fill="none" stroke="#f03030" stroke-width="0.6"/></svg>
<div id="cm">
<div style="left:0.6px;top:10.1px;width:81.6px;height:9.7px;background:#bdd9f1;border:1px solid #69a8dc;"></div>
<span class="cmi" style="top:1.90px">分類</span>
<span class="cmi" style="top:12.50px">分類</span>
<span class="cmi" style="top:24.80px">移除此欄位</span>
<span class="cmi" style="top:35.10px">區域選擇...</span>
<span class="cmi" style="top:45.40px">重設欄位</span>
<span class="cmi" style="top:57.80px">最佳合適欄位</span>
<span class="cmi" style="top:68.20px">最佳合適所有欄位</span>
<span class="cmi" style="top:80.50px">列印網格</span>
<span class="cmi" style="top:90.80px">放大</span>
<span class="cmi" style="top:101.20px">輸出網格...</span>
<span class="cmi" style="left:50.6px;top:80.40px">Ctrl+P</span>
<div class="sep" style="top:21.10px"></div>
<div class="sep" style="top:53.30px"></div>
<div class="sep" style="top:76.30px"></div>
</div>
<svg width="682" height="460" viewBox="0 0 682 460"><g transform="translate(147.2 79.4)"><path d="M1.2,0.4 L2.4,3 H0 Z" fill="#2848d0"/><rect x="0.2" y="3.6" width="2" height="1" fill="#2848d0"/><path d="M0,5.4 H2.4 L1.2,8 Z" fill="#d02828"/><path d="M4.8,0.4 V6.4" stroke="#111" stroke-width="0.8"/><circle cx="4.8" cy="6.8" r="1.1" fill="#111"/></g><g transform="translate(147.2 90.0)"><path d="M1.2,0.4 L2.4,3 H0 Z" fill="#d02828"/><rect x="0.2" y="3.6" width="2" height="1" fill="#d02828"/><path d="M0,5.4 H2.4 L1.2,8 Z" fill="#2848d0"/><path d="M4.8,0.4 V6.4" stroke="#111" stroke-width="0.8"/><circle cx="4.8" cy="6.8" r="1.1" fill="#111"/></g><rect x="147.4" y="103.4" width="5.4" height="4.8" fill="#fff" stroke="#5a7ab8" stroke-width="0.6"/><rect x="147.4" y="103.4" width="5.4" height="1.3" fill="#5a7ab8"/><path d="M150,106 l3,3 m0,-3 l-3,3" stroke="#e01818" stroke-width="0.9"/><rect x="147.2" y="114.8" width="3.6" height="4.2" fill="#e8ecf8" stroke="#667" stroke-width="0.5"/><rect x="149.4" y="113" width="3.6" height="3.6" fill="#f8f8ff" stroke="#4a5ab0" stroke-width="0.5"/><rect x="147.8" y="125" width="3.4" height="3.2" rx="0.4" fill="#e8f0ff" stroke="#2a50c8" stroke-width="1"/><rect x="147.2" y="136.6" width="6" height="5" fill="#fff" stroke="#8a8a8a" stroke-width="0.5" stroke-dasharray="1 0.6"/><path d="M148,139.4 H152.4" stroke="#333" stroke-width="0.6"/><rect x="147.2" y="147.2" width="6" height="5" fill="#fff" stroke="#8a8a8a" stroke-width="0.5" stroke-dasharray="1 0.6"/><path d="M148,149 H152.4M148,150.8 H152.4" stroke="#557" stroke-width="0.5"/><path d="M148.4,161 L149.4,158.8 H152.4 L151.6,161" fill="#fff" stroke="#555" stroke-width="0.5"/><rect x="147.2" y="161" width="5.8" height="3" fill="#9ab0d8" stroke="#445" stroke-width="0.5"/><rect x="148.2" y="163" width="3.6" height="1.6" fill="#30a8a8"/><circle cx="149.4" cy="171" r="2.1" fill="#d8f4ff" stroke="#2a70c0" stroke-width="0.8"/><path d="M151,172.8 L153.2,175.4" stroke="#886a30" stroke-width="1.1"/><polygon points="222.2,170.8 224,172.3 222.2,173.8" fill="#222"/></svg>
<div id="note">右鍵調整工法順序</div>
<svg width="682" height="460" viewBox="0 0 682 460"><line x1="273" y1="178.5" x2="172.8" y2="201.0" stroke="#ea1c2c" stroke-width="2.1"/><rect x="61.6" y="424.8" width="29" height="14.4" fill="none" stroke="#ed1c24" stroke-width="1.9"/></svg>
<div id="frame"></div>
</body></html>
